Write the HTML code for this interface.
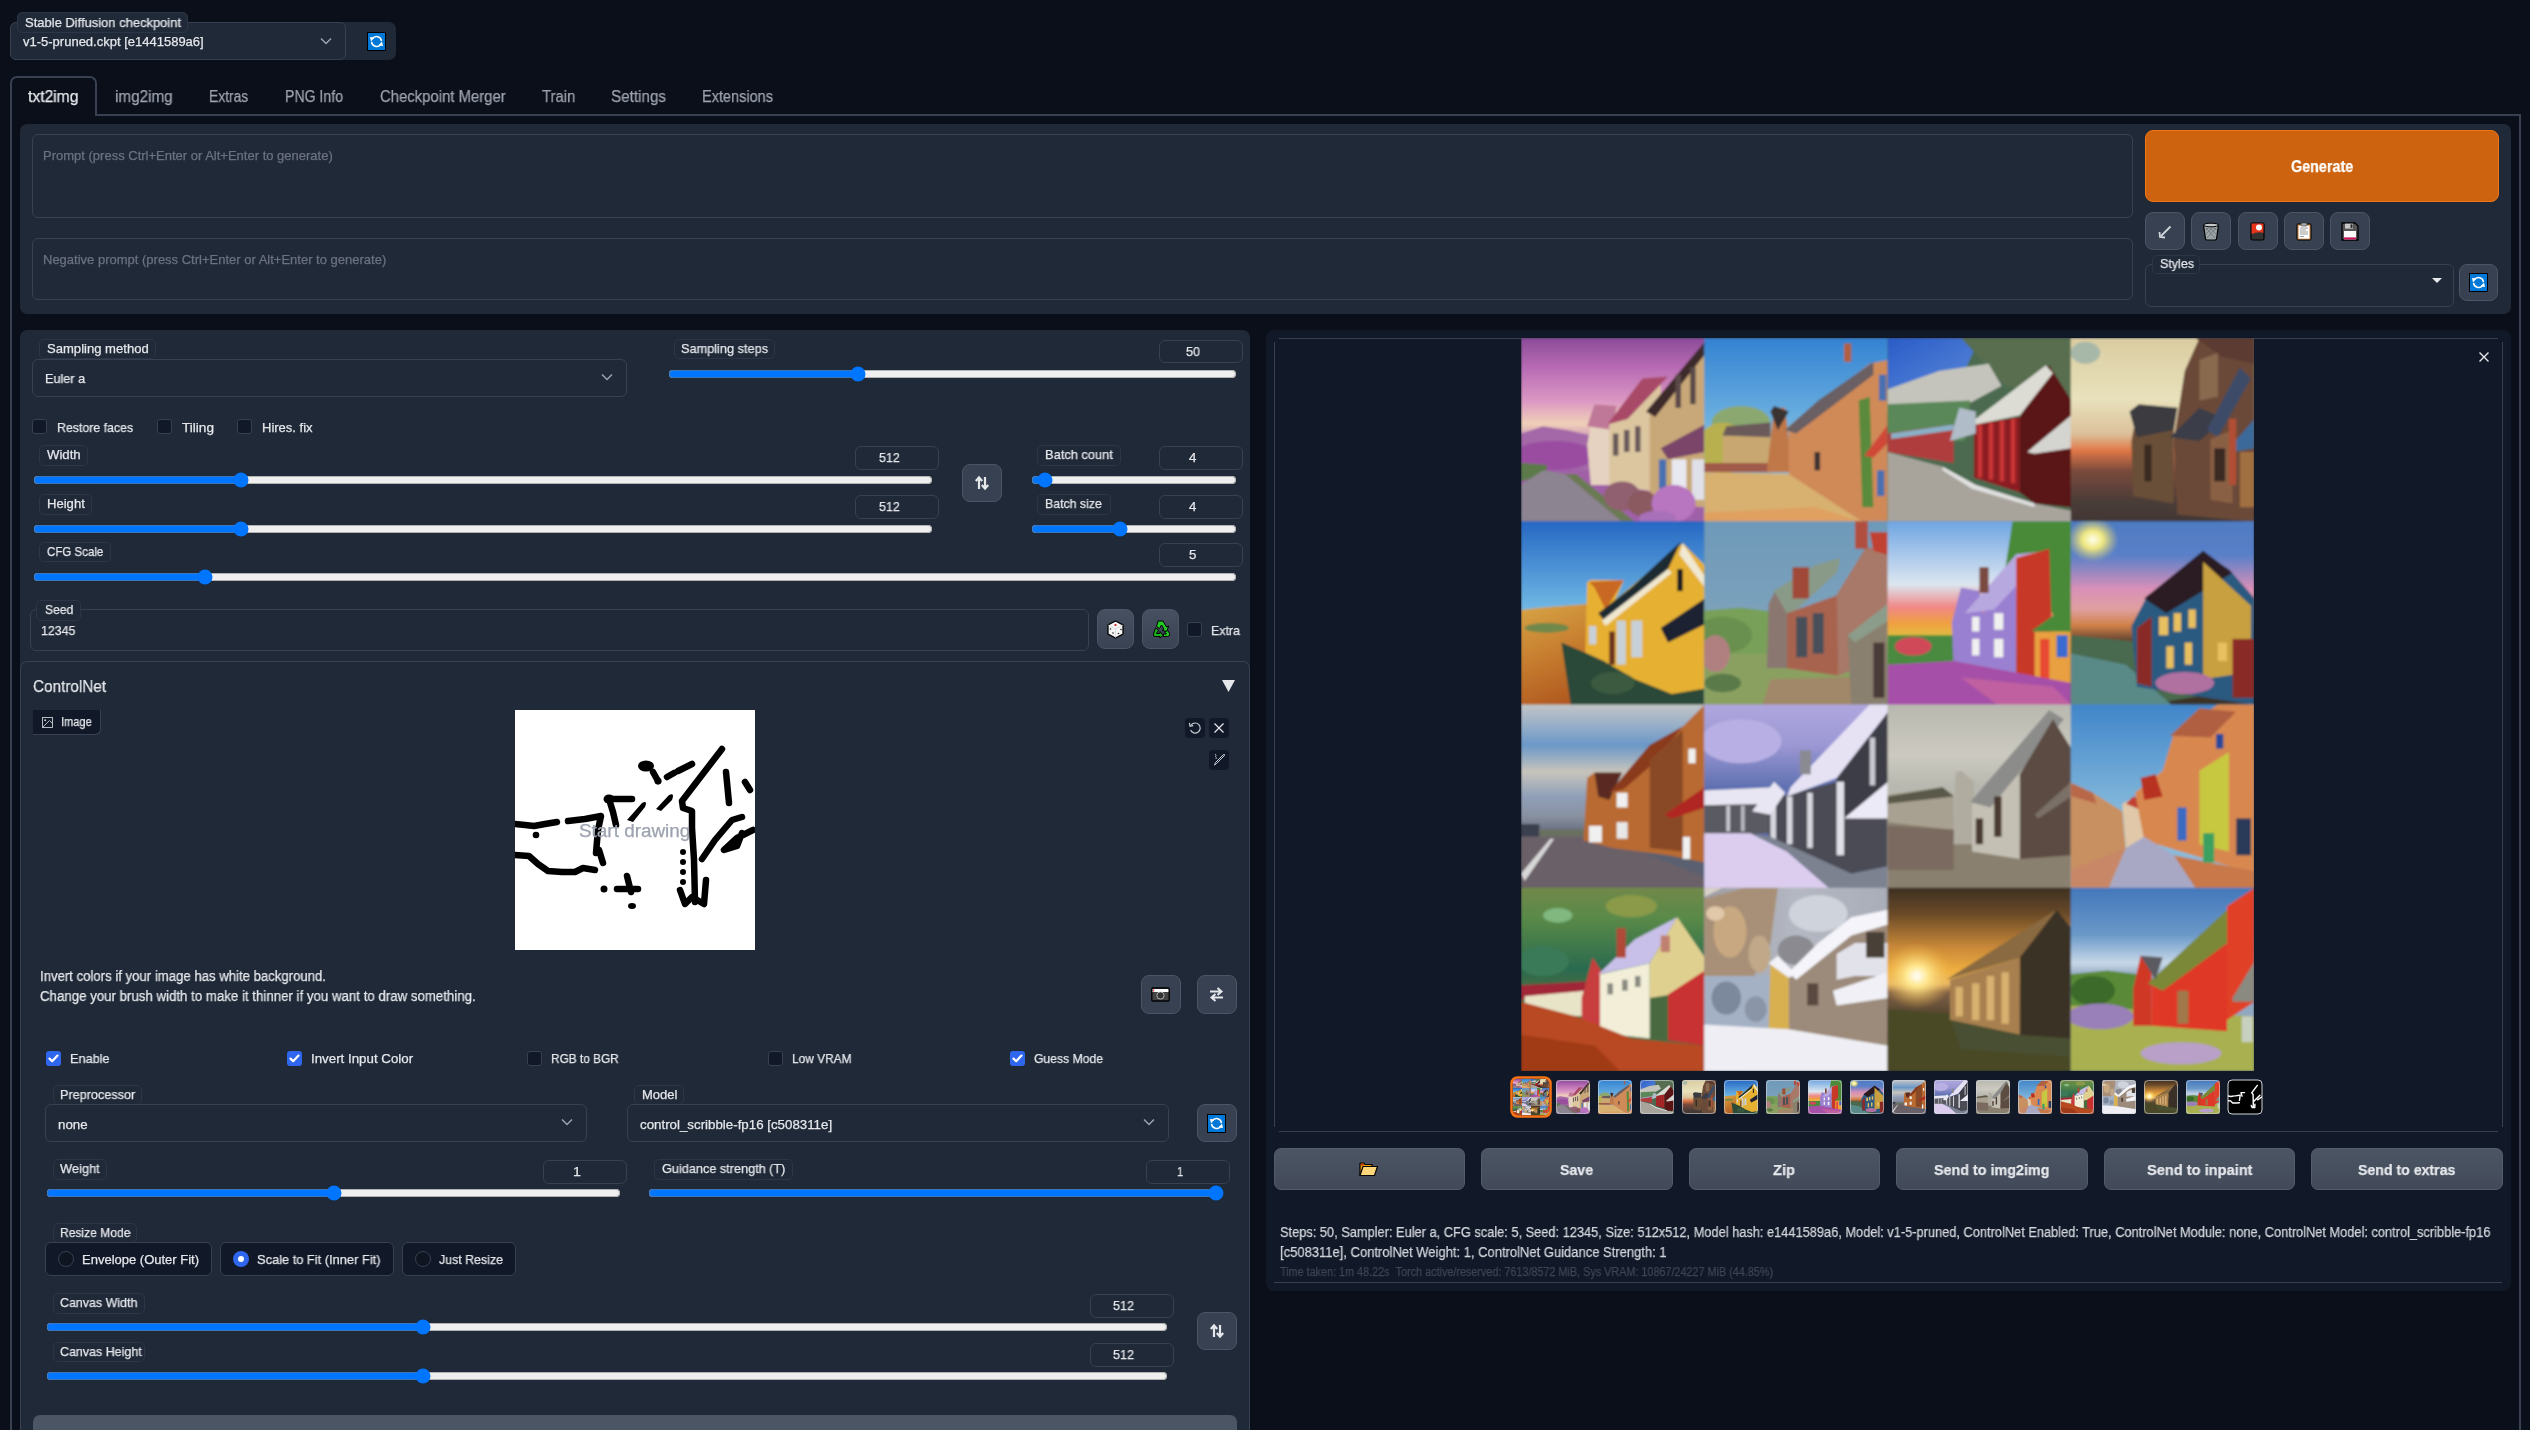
<!DOCTYPE html><html><head><meta charset="utf-8"><style>
*{box-sizing:border-box;margin:0;padding:0}
html,body{width:2530px;height:1430px;overflow:hidden;background:#0b0f19;font-family:"Liberation Sans", sans-serif;color:#e5e7eb}
.a{position:absolute}
.t{position:absolute;white-space:nowrap;line-height:1;transform-origin:0 0;-webkit-text-stroke:0.25px currentColor;will-change:transform}
.lbl{position:absolute;border:1px solid #2c3646;border-radius:5px;background:#1f2937}
.inp{position:absolute;border:1px solid #374151;border-radius:6px;background:#1f2937}
.btn{position:absolute;border:1px solid #4b5563;border-radius:7px;background:#374151}
.cb{position:absolute;width:15px;height:15px;border:1px solid #374151;border-radius:3px;background:#111827}
.cbc{position:absolute;width:15px;height:15px;border-radius:3px;background:#2f66ee}
.rng{position:absolute;margin:0;height:16px}
</style></head><body>
<div class="a" style="left:10px;top:22px;width:386px;height:38px;background:#1f2937;border-radius:7px"></div>
<div class="inp" style="left:10px;top:22px;width:336px;height:38px;"></div>
<div class="lbl" style="left:17px;top:12px;width:171px;height:21px"></div>
<div class="t" style="left:25px;top:16.3px;font-size:13px;color:#e5e7eb;font-weight:normal;transform:scaleX(0.9963);">Stable Diffusion checkpoint</div>
<div class="t" style="left:23px;top:34.5px;font-size:13px;color:#e5e7eb;font-weight:normal;">v1-5-pruned.ckpt [e1441589a6]</div>
<svg class="a" style="left:320px;top:37px" width="12" height="8" viewBox="0 0 12 8"><path d="M1 1.5 L6 6.5 L11 1.5" stroke="#9ca3af" stroke-width="1.5" fill="none"/></svg>
<svg class="a" style="left:367px;top:32px" width="19" height="19" viewBox="0 0 19 19"><rect x="0.5" y="0.5" width="18" height="18" fill="#0078d7" stroke="#000" stroke-width="1"/><path d="M5.4 6.63 A5 5 0 0 1 14.48 9.06" stroke="#fff" stroke-width="1.5" fill="none"/><path d="M13.6 12.37 A5 5 0 0 1 4.52 9.94" stroke="#fff" stroke-width="1.5" fill="none"/><path d="M3 5 L7.6 5.6 L4 9.6Z" fill="#fff"/><path d="M16 14 L11.4 13.4 L15 9.4Z" fill="#fff"/></svg>
<div class="a" style="left:10px;top:114px;width:2511px;height:1316px;border:2px solid #374151;border-bottom:none"></div>
<div class="a" style="left:10px;top:76px;width:87px;height:40px;border:2px solid #374151;border-bottom:none;border-radius:7px 7px 0 0;background:#0b0f19"></div>
<div class="t" style="left:28.2px;top:88.5px;font-size:16px;color:#e5e7eb;font-weight:normal;transform:scaleX(0.9772);">txt2img</div>
<div class="t" style="left:115px;top:88.5px;font-size:16px;color:#9ca3af;font-weight:normal;transform:scaleX(0.9542);">img2img</div>
<div class="t" style="left:209.3px;top:88.5px;font-size:16px;color:#9ca3af;font-weight:normal;transform:scaleX(0.8645);">Extras</div>
<div class="t" style="left:285px;top:88.5px;font-size:16px;color:#9ca3af;font-weight:normal;transform:scaleX(0.8813);">PNG Info</div>
<div class="t" style="left:380px;top:88.5px;font-size:16px;color:#9ca3af;font-weight:normal;transform:scaleX(0.9299);">Checkpoint Merger</div>
<div class="t" style="left:541.7px;top:88.5px;font-size:16px;color:#9ca3af;font-weight:normal;transform:scaleX(0.9286);">Train</div>
<div class="t" style="left:611px;top:88.5px;font-size:16px;color:#9ca3af;font-weight:normal;transform:scaleX(0.9514);">Settings</div>
<div class="t" style="left:702px;top:88.5px;font-size:16px;color:#9ca3af;font-weight:normal;transform:scaleX(0.9072);">Extensions</div>
<div class="a" style="left:20px;top:124px;width:2491px;height:190px;background:#1f2937;border-radius:7px"></div>
<div class="inp" style="left:32px;top:134px;width:2101px;height:84px;"></div>
<div class="t" style="left:43px;top:148.5px;font-size:13px;color:#6b7280;font-weight:normal;">Prompt (press Ctrl+Enter or Alt+Enter to generate)</div>
<div class="inp" style="left:32px;top:238px;width:2101px;height:62px;"></div>
<div class="t" style="left:43px;top:252.5px;font-size:13px;color:#6b7280;font-weight:normal;">Negative prompt (press Ctrl+Enter or Alt+Enter to generate)</div>
<div class="a" style="left:2145px;top:130px;width:354px;height:72px;background:#cd630e;border:1px solid #f07515;border-radius:8px"></div>
<div class="t" style="left:2290.7px;top:158.7px;font-size:16px;color:#ffffff;font-weight:bold;transform:scaleX(0.8966);">Generate</div>
<div class="btn" style="left:2145px;top:212px;width:40px;height:38px;border-radius:8px"></div>
<div class="btn" style="left:2191px;top:212px;width:40px;height:38px;border-radius:8px"></div>
<div class="btn" style="left:2238px;top:212px;width:40px;height:38px;border-radius:8px"></div>
<div class="btn" style="left:2284px;top:212px;width:40px;height:38px;border-radius:8px"></div>
<div class="btn" style="left:2330px;top:212px;width:40px;height:38px;border-radius:8px"></div>
<div class="inp" style="left:2145px;top:264px;width:309px;height:43px;"></div>
<div class="lbl" style="left:2152px;top:255px;width:48px;height:19px"></div>
<div class="t" style="left:2159.5px;top:257.3px;font-size:13px;color:#e5e7eb;font-weight:normal;transform:scaleX(0.9603);">Styles</div>
<svg class="a" style="left:2432px;top:278px" width="10" height="6"><path d="M0 0 L10 0 L5 5Z" fill="#e5e7eb"/></svg>
<div class="btn" style="left:2459px;top:264px;width:39px;height:37px;border-radius:8px"></div>
<svg class="a" style="left:2469px;top:273px" width="19" height="19" viewBox="0 0 19 19"><rect x="0.5" y="0.5" width="18" height="18" fill="#0078d7" stroke="#000" stroke-width="1"/><path d="M5.4 6.63 A5 5 0 0 1 14.48 9.06" stroke="#fff" stroke-width="1.5" fill="none"/><path d="M13.6 12.37 A5 5 0 0 1 4.52 9.94" stroke="#fff" stroke-width="1.5" fill="none"/><path d="M3 5 L7.6 5.6 L4 9.6Z" fill="#fff"/><path d="M16 14 L11.4 13.4 L15 9.4Z" fill="#fff"/></svg>
<div class="a" style="left:20px;top:330px;width:1230px;height:1100px;background:#1f2937;border-radius:7px 7px 0 0"></div>
<div class="lbl" style="left:39px;top:339px;width:117px;height:20px"></div>
<div class="t" style="left:46.8px;top:341.8px;font-size:13px;color:#e5e7eb;font-weight:normal;transform:scaleX(1.0052);">Sampling method</div>
<div class="inp" style="left:32px;top:359px;width:595px;height:38px;"></div>
<div class="t" style="left:45.2px;top:372.0px;font-size:13px;color:#e5e7eb;font-weight:normal;transform:scaleX(0.9732);">Euler a</div>
<svg class="a" style="left:601px;top:373px" width="12" height="8" viewBox="0 0 12 8"><path d="M1 1.5 L6 6.5 L11 1.5" stroke="#9ca3af" stroke-width="1.5" fill="none"/></svg>
<div class="lbl" style="left:674px;top:339px;width:101px;height:20px"></div>
<div class="t" style="left:681.2px;top:341.8px;font-size:13px;color:#e5e7eb;font-weight:normal;transform:scaleX(0.9787);">Sampling steps</div>
<div class="inp" style="left:1159px;top:340px;width:84px;height:23px;"></div>
<div class="t" style="left:1186px;top:344.9px;font-size:13px;color:#e5e7eb;font-weight:normal;transform:scaleX(0.9676);">50</div>
<input type="range" class="rng" min="1" max="150" value="50" step="any" style="left:668px;top:366px;width:569px">
<div class="cb" style="left:32px;top:419px"></div>
<div class="t" style="left:56.5px;top:421.0px;font-size:13px;color:#e5e7eb;font-weight:normal;transform:scaleX(0.9488);">Restore faces</div>
<div class="cb" style="left:157px;top:419px"></div>
<div class="t" style="left:181.5px;top:421.0px;font-size:13px;color:#e5e7eb;font-weight:normal;transform:scaleX(1.0460);">Tiling</div>
<div class="cb" style="left:237px;top:419px"></div>
<div class="t" style="left:261.5px;top:421.0px;font-size:13px;color:#e5e7eb;font-weight:normal;transform:scaleX(0.9928);">Hires. fix</div>
<div class="lbl" style="left:39px;top:445px;width:49px;height:21px"></div>
<div class="t" style="left:46.5px;top:448.3px;font-size:13px;color:#e5e7eb;font-weight:normal;transform:scaleX(1.0140);">Width</div>
<div class="inp" style="left:855px;top:446px;width:84px;height:24px;"></div>
<div class="t" style="left:879px;top:451.4px;font-size:13px;color:#e5e7eb;font-weight:normal;transform:scaleX(0.9584);">512</div>
<input type="range" class="rng" min="64" max="2048" value="512" step="any" style="left:33px;top:472px;width:900px">
<div class="lbl" style="left:39px;top:494px;width:53px;height:21px"></div>
<div class="t" style="left:46.5px;top:497.3px;font-size:13px;color:#e5e7eb;font-weight:normal;transform:scaleX(1.0059);">Height</div>
<div class="inp" style="left:855px;top:495px;width:84px;height:24px;"></div>
<div class="t" style="left:879px;top:500.4px;font-size:13px;color:#e5e7eb;font-weight:normal;transform:scaleX(0.9584);">512</div>
<input type="range" class="rng" min="64" max="2048" value="512" step="any" style="left:33px;top:521px;width:900px">
<div class="btn" style="left:962px;top:464px;width:40px;height:38px;border-radius:8px"></div>
<svg class="a" style="left:974px;top:475px" width="16" height="16" viewBox="0 0 16 16"><path d="M5 14 V3 M1.8 6 L5 2.5 L8.2 6" stroke="#e5e7eb" stroke-width="2.2" fill="none"/><path d="M11 2 V13 M7.8 10 L11 13.5 L14.2 10" stroke="#e5e7eb" stroke-width="2.2" fill="none"/></svg>
<div class="lbl" style="left:1037px;top:445px;width:84px;height:21px"></div>
<div class="t" style="left:1045px;top:448.3px;font-size:13px;color:#e5e7eb;font-weight:normal;transform:scaleX(0.9890);">Batch count</div>
<div class="inp" style="left:1159px;top:446px;width:84px;height:24px;"></div>
<div class="t" style="left:1189px;top:451.4px;font-size:13px;color:#e5e7eb;font-weight:normal;transform:scaleX(1.0229);">4</div>
<input type="range" class="rng" min="1" max="100" value="4" step="any" style="left:1031px;top:472px;width:206px">
<div class="lbl" style="left:1037px;top:494px;width:74px;height:21px"></div>
<div class="t" style="left:1045px;top:497.3px;font-size:13px;color:#e5e7eb;font-weight:normal;transform:scaleX(0.9469);">Batch size</div>
<div class="inp" style="left:1159px;top:495px;width:84px;height:24px;"></div>
<div class="t" style="left:1189px;top:500.4px;font-size:13px;color:#e5e7eb;font-weight:normal;transform:scaleX(1.0229);">4</div>
<input type="range" class="rng" min="1" max="8" value="4" step="any" style="left:1031px;top:521px;width:206px">
<div class="lbl" style="left:39px;top:542px;width:72px;height:20px"></div>
<div class="t" style="left:46.5px;top:544.8px;font-size:13px;color:#e5e7eb;font-weight:normal;transform:scaleX(0.8855);">CFG Scale</div>
<div class="inp" style="left:1159px;top:543px;width:84px;height:24px;"></div>
<div class="t" style="left:1189px;top:548.4px;font-size:13px;color:#e5e7eb;font-weight:normal;transform:scaleX(1.0229);">5</div>
<input type="range" class="rng" min="1" max="30" value="5" step="any" style="left:33px;top:569px;width:1204px">
<div class="inp" style="left:30px;top:609px;width:1059px;height:42px;"></div>
<div class="lbl" style="left:36px;top:600px;width:45px;height:21px"></div>
<div class="t" style="left:44.5px;top:603.3px;font-size:13px;color:#e5e7eb;font-weight:normal;transform:scaleX(0.9284);">Seed</div>
<div class="t" style="left:41px;top:624.0px;font-size:13px;color:#e5e7eb;font-weight:normal;transform:scaleX(0.9487);">12345</div>
<div class="cb" style="left:1187px;top:622px"></div>
<div class="t" style="left:1211px;top:624.0px;font-size:13px;color:#e5e7eb;font-weight:normal;transform:scaleX(0.9557);">Extra</div>
<div class="a" style="left:20px;top:661px;width:1230px;height:769px;border:1px solid #374151;border-bottom:none;border-radius:7px 7px 0 0"></div>
<div class="t" style="left:33.2px;top:677.6px;font-size:17px;color:#e5e7eb;font-weight:normal;transform:scaleX(0.8995);">ControlNet</div>
<svg class="a" style="left:1222px;top:680px" width="13" height="12"><path d="M0 0 L13 0 L6.5 12Z" fill="#e5e7eb"/></svg>
<div class="a" style="left:33px;top:710px;width:68px;height:25px;background:#111827;border-right:1px solid #374151;border-bottom:1px solid #374151;border-radius:0 0 6px 0"></div>
<div class="t" style="left:61px;top:715.8px;font-size:12px;color:#e5e7eb;font-weight:normal;transform:scaleX(0.9203);">Image</div>
<div class="a" style="left:515px;top:710px;width:240px;height:240px;background:#fff"></div>
<div class="a" style="left:1185px;top:718px;width:20px;height:20px;background:#111827;border-radius:4px"></div>
<div class="a" style="left:1209px;top:718px;width:20px;height:20px;background:#111827;border-radius:4px"></div>
<div class="a" style="left:1209px;top:750px;width:20px;height:20px;background:#111827;border-radius:4px"></div>
<div class="t" style="left:40px;top:969.1px;font-size:14px;color:#e5e7eb;font-weight:normal;transform:scaleX(0.9400);">Invert colors if your image has white background.</div>
<div class="t" style="left:40px;top:989.1px;font-size:14px;color:#e5e7eb;font-weight:normal;transform:scaleX(0.9473);">Change your brush width to make it thinner if you want to draw something.</div>
<div class="btn" style="left:1141px;top:975px;width:40px;height:39px;border-radius:8px"></div>
<div class="btn" style="left:1197px;top:975px;width:40px;height:39px;border-radius:8px"></div>
<div class="cbc" style="left:46px;top:1051px"></div>
<svg class="a" style="left:46px;top:1051px" width="15" height="15" viewBox="0 0 15 15"><path d="M3.5 7.6 L6.2 10.2 L11.5 4.6" stroke="#fff" stroke-width="2.2" fill="none" stroke-linecap="round" stroke-linejoin="round"/></svg>
<div class="t" style="left:69.5px;top:1052.0px;font-size:13px;color:#e5e7eb;font-weight:normal;transform:scaleX(0.9757);">Enable</div>
<div class="cbc" style="left:287px;top:1051px"></div>
<svg class="a" style="left:287px;top:1051px" width="15" height="15" viewBox="0 0 15 15"><path d="M3.5 7.6 L6.2 10.2 L11.5 4.6" stroke="#fff" stroke-width="2.2" fill="none" stroke-linecap="round" stroke-linejoin="round"/></svg>
<div class="t" style="left:310.5px;top:1052.0px;font-size:13px;color:#e5e7eb;font-weight:normal;transform:scaleX(1.0239);">Invert Input Color</div>
<div class="cb" style="left:527px;top:1051px"></div>
<div class="t" style="left:550.5px;top:1052.0px;font-size:13px;color:#e5e7eb;font-weight:normal;transform:scaleX(0.9097);">RGB to BGR</div>
<div class="cb" style="left:768px;top:1051px"></div>
<div class="t" style="left:791.5px;top:1052.0px;font-size:13px;color:#e5e7eb;font-weight:normal;transform:scaleX(0.9149);">Low VRAM</div>
<div class="cbc" style="left:1010px;top:1051px"></div>
<svg class="a" style="left:1010px;top:1051px" width="15" height="15" viewBox="0 0 15 15"><path d="M3.5 7.6 L6.2 10.2 L11.5 4.6" stroke="#fff" stroke-width="2.2" fill="none" stroke-linecap="round" stroke-linejoin="round"/></svg>
<div class="t" style="left:1033.5px;top:1052.0px;font-size:13px;color:#e5e7eb;font-weight:normal;transform:scaleX(0.9362);">Guess Mode</div>
<div class="lbl" style="left:53px;top:1085px;width:89px;height:20px"></div>
<div class="t" style="left:59.6px;top:1087.8px;font-size:13px;color:#e5e7eb;font-weight:normal;transform:scaleX(0.9727);">Preprocessor</div>
<div class="inp" style="left:45px;top:1104px;width:542px;height:38px;"></div>
<div class="t" style="left:58px;top:1117.5px;font-size:13px;color:#e5e7eb;font-weight:normal;transform:scaleX(1.0234);">none</div>
<svg class="a" style="left:561px;top:1118px" width="12" height="8" viewBox="0 0 12 8"><path d="M1 1.5 L6 6.5 L11 1.5" stroke="#9ca3af" stroke-width="1.5" fill="none"/></svg>
<div class="lbl" style="left:634px;top:1085px;width:50px;height:20px"></div>
<div class="t" style="left:641.8px;top:1087.8px;font-size:13px;color:#e5e7eb;font-weight:normal;transform:scaleX(0.9881);">Model</div>
<div class="inp" style="left:627px;top:1104px;width:542px;height:38px;"></div>
<div class="t" style="left:639.6px;top:1117.5px;font-size:13px;color:#e5e7eb;font-weight:normal;transform:scaleX(1.0237);">control_scribble-fp16 [c508311e]</div>
<svg class="a" style="left:1143px;top:1118px" width="12" height="8" viewBox="0 0 12 8"><path d="M1 1.5 L6 6.5 L11 1.5" stroke="#9ca3af" stroke-width="1.5" fill="none"/></svg>
<div class="btn" style="left:1197px;top:1104px;width:40px;height:38px;border-radius:8px"></div>
<svg class="a" style="left:1207px;top:1114px" width="19" height="19" viewBox="0 0 19 19"><rect x="0.5" y="0.5" width="18" height="18" fill="#0078d7" stroke="#000" stroke-width="1"/><path d="M5.4 6.63 A5 5 0 0 1 14.48 9.06" stroke="#fff" stroke-width="1.5" fill="none"/><path d="M13.6 12.37 A5 5 0 0 1 4.52 9.94" stroke="#fff" stroke-width="1.5" fill="none"/><path d="M3 5 L7.6 5.6 L4 9.6Z" fill="#fff"/><path d="M16 14 L11.4 13.4 L15 9.4Z" fill="#fff"/></svg>
<div class="lbl" style="left:53px;top:1159px;width:54px;height:21px"></div>
<div class="t" style="left:59.6px;top:1162.3px;font-size:13px;color:#e5e7eb;font-weight:normal;transform:scaleX(0.9867);">Weight</div>
<div class="inp" style="left:543px;top:1160px;width:84px;height:24px;"></div>
<div class="t" style="left:573.4px;top:1165.4px;font-size:13px;color:#e5e7eb;font-weight:normal;transform:scaleX(1.0920);">1</div>
<input type="range" class="rng" min="0" max="2" value="1" step="any" style="left:46px;top:1185px;width:575px">
<div class="lbl" style="left:654px;top:1159px;width:139px;height:21px"></div>
<div class="t" style="left:661.6px;top:1162.3px;font-size:13px;color:#e5e7eb;font-weight:normal;transform:scaleX(0.9759);">Guidance strength (T)</div>
<div class="inp" style="left:1146px;top:1160px;width:84px;height:24px;"></div>
<div class="t" style="left:1176.6px;top:1165.4px;font-size:13px;color:#e5e7eb;font-weight:normal;transform:scaleX(0.8570);">1</div>
<input type="range" class="rng" min="0" max="1" value="1" step="any" style="left:648px;top:1185px;width:576px">
<div class="lbl" style="left:53px;top:1223px;width:84px;height:20px"></div>
<div class="t" style="left:59.6px;top:1225.8px;font-size:13px;color:#e5e7eb;font-weight:normal;transform:scaleX(0.9278);">Resize Mode</div>
<div class="a" style="left:45px;top:1242px;width:167px;height:34px;background:#111827;border:1px solid #374151;border-radius:6px"></div>
<div class="a" style="left:58px;top:1251px;width:16px;height:16px;border-radius:50%;background:#0f1521;border:1px solid #374151"></div>
<div class="t" style="left:82px;top:1253.0px;font-size:13px;color:#e5e7eb;font-weight:normal;transform:scaleX(0.9962);">Envelope (Outer Fit)</div>
<div class="a" style="left:220px;top:1242px;width:174px;height:34px;background:#111827;border:1px solid #374151;border-radius:6px"></div>
<div class="a" style="left:233px;top:1251px;width:16px;height:16px;border-radius:50%;background:#2f66ee"></div><div class="a" style="left:238px;top:1256px;width:6px;height:6px;border-radius:50%;background:#fff"></div>
<div class="t" style="left:257px;top:1253.0px;font-size:13px;color:#e5e7eb;font-weight:normal;transform:scaleX(0.9873);">Scale to Fit (Inner Fit)</div>
<div class="a" style="left:402px;top:1242px;width:114px;height:34px;background:#111827;border:1px solid #374151;border-radius:6px"></div>
<div class="a" style="left:415px;top:1251px;width:16px;height:16px;border-radius:50%;background:#0f1521;border:1px solid #374151"></div>
<div class="t" style="left:439px;top:1253.0px;font-size:13px;color:#e5e7eb;font-weight:normal;transform:scaleX(0.9523);">Just Resize</div>
<div class="lbl" style="left:53px;top:1293px;width:92px;height:21px"></div>
<div class="t" style="left:59.6px;top:1296.3px;font-size:13px;color:#e5e7eb;font-weight:normal;transform:scaleX(0.9565);">Canvas Width</div>
<div class="inp" style="left:1090px;top:1294px;width:84px;height:24px;"></div>
<div class="t" style="left:1113px;top:1299.4px;font-size:13px;color:#e5e7eb;font-weight:normal;transform:scaleX(0.9676);">512</div>
<input type="range" class="rng" min="256" max="1024" value="512" step="any" style="left:46px;top:1319px;width:1122px">
<div class="lbl" style="left:53px;top:1342px;width:92px;height:20px"></div>
<div class="t" style="left:59.6px;top:1344.8px;font-size:13px;color:#e5e7eb;font-weight:normal;transform:scaleX(0.9580);">Canvas Height</div>
<div class="inp" style="left:1090px;top:1343px;width:84px;height:24px;"></div>
<div class="t" style="left:1113px;top:1348.4px;font-size:13px;color:#e5e7eb;font-weight:normal;transform:scaleX(0.9676);">512</div>
<input type="range" class="rng" min="256" max="1024" value="512" step="any" style="left:46px;top:1368px;width:1122px">
<div class="btn" style="left:1197px;top:1312px;width:40px;height:38px;border-radius:8px"></div>
<svg class="a" style="left:1209px;top:1323px" width="16" height="16" viewBox="0 0 16 16"><path d="M5 14 V3 M1.8 6 L5 2.5 L8.2 6" stroke="#e5e7eb" stroke-width="2.2" fill="none"/><path d="M11 2 V13 M7.8 10 L11 13.5 L14.2 10" stroke="#e5e7eb" stroke-width="2.2" fill="none"/></svg>
<div class="a" style="left:33px;top:1415px;width:1204px;height:15px;background:#4b5563;border-radius:7px 7px 0 0"></div>
<div class="a" style="left:1266px;top:330px;width:1245px;height:961px;background:#111827;border-radius:8px"></div>
<div class="a" style="left:1279px;top:338px;width:1219px;height:1px;background:#374151"></div>
<div class="a" style="left:1274px;top:342px;width:1px;height:785px;background:#374151"></div>
<div class="a" style="left:2502px;top:342px;width:1px;height:785px;background:#374151"></div>
<div class="a" style="left:1279px;top:1131px;width:1219px;height:1px;background:#374151"></div>
<svg class="a" style="left:1521px;top:338px" width="733" height="733" viewBox="0 0 733 733"><defs><linearGradient id="g00" x1="0" y1="0" x2="0" y2="1"><stop offset="0" stop-color="#7c3f8e"/><stop offset="0.2" stop-color="#b86cb4"/><stop offset="0.36" stop-color="#dc98c4"/><stop offset="0.47" stop-color="#f0d0b8"/><stop offset="0.55" stop-color="#c890b8"/><stop offset="0.7" stop-color="#a060a8"/></linearGradient><linearGradient id="g01" x1="0" y1="0" x2="0" y2="1"><stop offset="0" stop-color="#2c7cd0"/><stop offset="0.45" stop-color="#6cb0e0"/><stop offset="0.55" stop-color="#88bcd8"/></linearGradient><linearGradient id="g02" x1="0" y1="0" x2="1" y2="1"><stop offset="0" stop-color="#2a5cc8"/><stop offset="1" stop-color="#5a88d8"/></linearGradient><linearGradient id="g03" x1="0" y1="0" x2="0" y2="1"><stop offset="0" stop-color="#d8c89c"/><stop offset="0.35" stop-color="#e8e2bc"/><stop offset="0.52" stop-color="#dcc09a"/><stop offset="0.6" stop-color="#e07848"/><stop offset="0.7" stop-color="#7a4a3c"/><stop offset="0.85" stop-color="#4a3c38"/><stop offset="1" stop-color="#3c3430"/></linearGradient><linearGradient id="g10" x1="0" y1="0" x2="0" y2="1"><stop offset="0" stop-color="#1c5ec0"/><stop offset="0.48" stop-color="#70b8e4"/></linearGradient><linearGradient id="hill10" x1="0" y1="0" x2="0.3" y2="1"><stop offset="0" stop-color="#d8a848"/><stop offset="0.5" stop-color="#c88030"/><stop offset="1" stop-color="#b05820"/></linearGradient><linearGradient id="g11" x1="0" y1="0" x2="0" y2="1"><stop offset="0" stop-color="#6c98b8"/><stop offset="0.5" stop-color="#7ca2bc"/></linearGradient><linearGradient id="g12" x1="0" y1="0" x2="0" y2="1"><stop offset="0" stop-color="#5c9ae0"/><stop offset="0.36" stop-color="#dce6f0"/><stop offset="0.47" stop-color="#f08888"/><stop offset="0.55" stop-color="#f0a040"/><stop offset="0.62" stop-color="#e0c040"/><stop offset="0.7" stop-color="#5a9a40"/></linearGradient><linearGradient id="g13" x1="0" y1="0" x2="0" y2="1"><stop offset="0" stop-color="#4a7ac0"/><stop offset="0.22" stop-color="#5a80c8"/><stop offset="0.38" stop-color="#d890b8"/><stop offset="0.48" stop-color="#e0a0a0"/><stop offset="0.56" stop-color="#d08048"/><stop offset="0.66" stop-color="#3a3028"/></linearGradient><radialGradient id="sun13"><stop offset="0" stop-color="#fffff0"/><stop offset="0.4" stop-color="#f0e880"/><stop offset="1" stop-color="#e0d070" stop-opacity="0"/></radialGradient><linearGradient id="g20" x1="0" y1="0" x2="0" y2="1"><stop offset="0" stop-color="#d8d0c4"/><stop offset="0.15" stop-color="#9ab0c8"/><stop offset="0.25" stop-color="#6a98c8"/><stop offset="0.38" stop-color="#c8c4bc"/><stop offset="0.5" stop-color="#90a0b8"/><stop offset="0.6" stop-color="#8890a0"/><stop offset="0.7" stop-color="#5a6070"/></linearGradient><linearGradient id="g21" x1="0" y1="0" x2="0" y2="1"><stop offset="0" stop-color="#b4aae0"/><stop offset="0.25" stop-color="#9c98d4"/><stop offset="0.46" stop-color="#5e70b0"/></linearGradient><linearGradient id="g22" x1="0" y1="0" x2="0" y2="1"><stop offset="0" stop-color="#b4b4ac"/><stop offset="0.3" stop-color="#cccac0"/><stop offset="0.45" stop-color="#b8b8b0"/></linearGradient><linearGradient id="g23" x1="0" y1="0" x2="0" y2="1"><stop offset="0" stop-color="#3a80c8"/><stop offset="0.6" stop-color="#88bcdc"/></linearGradient><linearGradient id="g30" x1="0" y1="0" x2="0" y2="1"><stop offset="0" stop-color="#7a8848"/><stop offset="0.2" stop-color="#5a8a48"/><stop offset="0.45" stop-color="#2a6a50"/><stop offset="0.55" stop-color="#4a6a40"/></linearGradient><linearGradient id="g31" x1="0" y1="0" x2="1" y2="0"><stop offset="0" stop-color="#9a9aa2"/><stop offset="0.5" stop-color="#b4b8c2"/><stop offset="1" stop-color="#a8acb6"/></linearGradient><linearGradient id="g32" x1="0" y1="0" x2="0" y2="1"><stop offset="0" stop-color="#2a2520"/><stop offset="0.18" stop-color="#6a4a28"/><stop offset="0.34" stop-color="#c88838"/><stop offset="0.46" stop-color="#f0b040"/><stop offset="0.52" stop-color="#e8b868"/><stop offset="0.56" stop-color="#806048"/><stop offset="0.7" stop-color="#4a4028"/><stop offset="1" stop-color="#3a3420"/></linearGradient><radialGradient id="sun32"><stop offset="0" stop-color="#ffffff"/><stop offset="0.3" stop-color="#ffe890"/><stop offset="1" stop-color="#f0b040" stop-opacity="0"/></radialGradient><linearGradient id="g33" x1="0" y1="0" x2="0" y2="1"><stop offset="0" stop-color="#3a70b8"/><stop offset="0.28" stop-color="#6a98c8"/><stop offset="0.42" stop-color="#c8d8e8"/><stop offset="0.48" stop-color="#90a8c0"/></linearGradient><filter id="soft" x="0" y="0" width="733" height="733" filterUnits="userSpaceOnUse"><feGaussianBlur stdDeviation="0.9" edgeMode="duplicate"/></filter></defs><g filter="url(#soft)"><svg x="0.00" y="0.00" width="183.85" height="183.85" viewBox="0 0 100 100" preserveAspectRatio="none"><rect x="-6" y="-6" width="112" height="112" fill="url(#g00)" /><polygon points="0,52 12,48 25,50 38,53 38,72 0,72" fill="#a468a8" /><ellipse cx="18" cy="64" rx="22" ry="8" fill="#9a4ea0" /><polygon points="0,68 14,69 14,74 0,78" fill="#5c7a4a" /><polygon points="0,100 0,80 12,72 24,74 55,100" fill="#8c8490" /><polygon points="24,74 30,74 62,100 55,100" fill="#6a7a52" /><polygon points="36,58 40,36 52,38 52,80 38,80" fill="#e6d2c0" /><polygon points="36,48 40,36 52,37 50,50" fill="#c07898" /><polygon points="48,46 76,22 76,84 48,80" fill="#dcc6a0" /><polygon points="47,47 66,22 80,21 58,44" fill="#a84868" /><polygon points="70,40 100,4 100,92 70,90" fill="#c8a878" /><polygon points="68,40 100,2 100,9 73,43" fill="#3c2c2a" /><polygon points="76,60 100,47 100,62 80,66" fill="#7a4468" /><rect x="50" y="52" width="3" height="12" fill="#6a5a5a" /><rect x="56" y="50" width="3" height="12" fill="#6a5a5a" /><rect x="62" y="48" width="3" height="14" fill="#6a5a5a" /><rect x="84" y="20" width="3" height="18" fill="#5a4a48" /><rect x="92" y="16" width="3" height="20" fill="#5a4a48" /><rect x="82" y="66" width="8" height="20" fill="#e8e8f0" /><rect x="93" y="66" width="7" height="22" fill="#e0e0e8" /><rect x="75" y="66" width="4" height="16" fill="#4a70b0" /><ellipse cx="55" cy="86" rx="10" ry="8" fill="#906070" /><ellipse cx="66" cy="90" rx="8" ry="7" fill="#8a5a60" /><ellipse cx="83" cy="90" rx="12" ry="10" fill="#b874c0" /><ellipse cx="74" cy="98" rx="10" ry="4" fill="#a870b8" /></svg><svg x="183.25" y="0.00" width="183.85" height="183.85" viewBox="0 0 100 100" preserveAspectRatio="none"><rect x="-6" y="-6" width="112" height="112" fill="url(#g01)" /><ellipse cx="20" cy="46" rx="16" ry="9" fill="#8aa870" /><ellipse cx="10" cy="60" rx="14" ry="14" fill="#b8b050" /><polygon points="10,52 36,47 36,72 10,72" fill="#c8a870" /><polygon points="10,53 12,48 36,46 36,54" fill="#6a5a5a" /><polygon points="0,68 36,68 36,73 0,73" fill="#a05a48" /><polygon points="34,73 38,38 44,38 48,73" fill="#c07848" /><polygon points="36,40 38,37 46,40 40,50" fill="#3a3030" /><polygon points="46,48 90,14 100,12 100,100 82,100 46,76" fill="#d08a58" /><polygon points="44,50 62,34 92,13 92,20 50,52" fill="#6a5e62" /><rect x="76" y="3" width="4" height="10" fill="#b06040" /><polygon points="84,34 90,32 92,92 86,92" fill="#5a8a3a" /><polygon points="87,64 100,47 100,57 92,65" fill="#d04838" /><polygon points="0,73 46,74 86,100 0,100" fill="#d8b070" /><polygon points="0,95 60,92 86,100 0,100" fill="#e0a060" /><rect x="95" y="20" width="4" height="14" fill="#4a70b0" /><rect x="94" y="72" width="4" height="14" fill="#4a70b0" /><rect x="60" y="62" width="3" height="10" fill="#3a3030" /></svg><svg x="366.50" y="0.00" width="183.85" height="183.85" viewBox="0 0 100 100" preserveAspectRatio="none"><rect x="-6" y="-6" width="112" height="112" fill="#4c6a50" /><polygon points="0,0 50,0 42,18 0,28" fill="url(#g02)" /><polygon points="40,0 100,0 100,34 64,26" fill="#586e50" /><polygon points="0,28 28,18 55,14 62,26 40,38 0,40" fill="#c4c4bc" /><polygon points="0,36 45,34 42,56 0,56" fill="#5a8858" /><polygon points="0,52 36,47 36,68 0,62" fill="#b03c3c" /><polygon points="2,52 36,47 36,50 2,55" fill="#8ab0c8" /><polygon points="0,62 30,70 48,80 80,90 100,94 100,100 0,100" fill="#a8a49c" /><polygon points="30,70 48,80 80,90 80,92 46,82 30,72" fill="#e0e0e0" /><polygon points="47,47 72,43 72,84 47,76" fill="#8a1e22" /><polygon points="72,43 88,15 100,34 100,92 80,90 72,84" fill="#5a1416" /><rect x="49" y="47" width="2.5" height="29" fill="#c83434" /><rect x="55" y="46" width="2.5" height="31" fill="#c83434" /><rect x="61" y="45" width="2.5" height="33" fill="#c83434" /><rect x="67" y="44" width="2.5" height="35" fill="#c83434" /><polygon points="44,47 86,15 90,19 72,42 48,47" fill="#dcdcd4" /><polygon points="34,56 39,38 48,40 48,52" fill="#b0bcc8" /><polygon points="76,62 100,42 100,60 80,63" fill="#d4d4d0" /></svg><svg x="549.75" y="0.00" width="183.85" height="183.85" viewBox="0 0 100 100" preserveAspectRatio="none"><rect x="-6" y="-6" width="112" height="112" fill="url(#g03)" /><ellipse cx="8" cy="8" rx="8" ry="6" fill="#a8b8a8" /><polygon points="33,56 36,40 46,38 56,44 56,90 34,86" fill="#6a5038" /><polygon points="32,40 37,36 58,38 56,50 36,54" fill="#3a3a40" /><rect x="40" y="58" width="4" height="20" fill="#3a2a24" /><polygon points="56,56 62,18 70,0 100,0 100,100 58,96" fill="#6a4a38" /><polygon points="68,0 100,0 100,14 82,10" fill="#5c3a30" /><polygon points="70,12 80,8 80,32 70,34" fill="#8a6a50" /><polygon points="54,54 70,38 84,44 70,56" fill="#3a3c48" /><polygon points="74,50 92,16 98,22 80,54" fill="#3c4c68" /><polygon points="86,60 100,44 100,60 88,62" fill="#3a6a9a" /><polygon points="76,55 88,50 88,90 76,88" fill="#8a6044" /><rect x="86" y="44" width="4" height="36" fill="#b05034" /><rect x="92" y="62" width="8" height="30" fill="#a07040" /><rect x="78" y="60" width="6" height="18" fill="#3a2a24" /></svg><svg x="0.00" y="183.25" width="183.85" height="183.85" viewBox="0 0 100 100" preserveAspectRatio="none"><rect x="-6" y="-6" width="112" height="112" fill="url(#g10)" /><polygon points="-6,49 10,47 36,45 40,106 -6,106" fill="url(#hill10)" /><ellipse cx="14" cy="58" rx="12" ry="2.6" fill="#70884a" /><polygon points="34,106 36,33 38,32 56,32 48,50 48,106" fill="#e8b030" /><polygon points="37,33 56,32 46,48 40,36" fill="#c86820" /><polygon points="45,48 88,12 106,30 106,106 45,106" fill="#e6b030" /><polygon points="42,50 60,36 87,11 80,26 46,55" fill="#1c2a30" /><polygon points="44,54 80,26 82,28 46,57" fill="#f0e8d0" /><polygon points="88,12 100,30 100,36 86,18" fill="#f0e8d0" /><polygon points="76,58 100,42 100,56 80,66" fill="#1a2030" /><rect x="52" y="54" width="5" height="24" fill="#c8d0d8" /><rect x="60" y="54" width="6" height="20" fill="#c8d0d8" /><rect x="37" y="57" width="4" height="10" fill="#c8d0d8" /><rect x="85" y="26" width="3" height="12" fill="#1a1a20" /><rect x="48" y="60" width="3" height="18" fill="#6a3020" /><polygon points="22,66 36,72 45,76 62,86 82,94 106,90 106,106 28,106" fill="#2c4a38" /><ellipse cx="50" cy="88" rx="12" ry="6" fill="#3a5a40" /></svg><svg x="183.25" y="183.25" width="183.85" height="183.85" viewBox="0 0 100 100" preserveAspectRatio="none"><rect x="-6" y="-6" width="112" height="112" fill="url(#g11)" /><polygon points="-6,49 20,47 36,49 36,74 -6,74" fill="#78a058" /><ellipse cx="10" cy="62" rx="16" ry="10" fill="#6a9050" /><polygon points="-6,72 106,72 106,106 -6,106" fill="#8aa060" /><polygon points="36,86 106,84 106,106 30,106" fill="#a08868" /><ellipse cx="6" cy="72" rx="8" ry="10" fill="#b08080" /><ellipse cx="10" cy="88" rx="10" ry="5" fill="#5a7a48" /><polygon points="34,80 35,45 39,37 45,44 45,80" fill="#8a7870" /><polygon points="38,38 60,24 74,20 72,28 46,52" fill="#8a9a88" /><rect x="48" y="25" width="9" height="17" fill="#a04a38" /><polygon points="45,50 73,40 73,84 45,80" fill="#a86450" /><rect x="50" y="52" width="6" height="22" fill="#4a5058" /><rect x="59" y="50" width="6" height="22" fill="#4a5058" /><polygon points="72,40 88,14 100,16 106,18 106,70 73,84" fill="#a87868" /><rect x="82" y="-6" width="7" height="21" fill="#b05040" /><polygon points="90,6 106,6 106,20 92,16" fill="#c04030" /><polygon points="78,62 106,42 106,106 80,100" fill="#8a8070" /><polygon points="78,62 106,40 106,50 82,66" fill="#8c9c8a" /><rect x="92" y="66" width="6" height="30" fill="#4a3a38" /></svg><svg x="366.50" y="183.25" width="183.85" height="183.85" viewBox="0 0 100 100" preserveAspectRatio="none"><rect x="-6" y="-6" width="112" height="112" fill="url(#g12)" /><polygon points="68,0 100,0 100,62 86,46 64,26" fill="#4a8a38" /><polygon points="0,62 36,62 36,82 0,82" fill="#4a8a40" /><ellipse cx="14" cy="68" rx="10" ry="5" fill="#d04858" /><polygon points="35,55 40,36 50,38 52,50 70,22 70,84 36,80" fill="#9a80d0" /><polygon points="42,50 70,18 88,16 58,48" fill="#b8a8e0" /><rect x="50" y="25" width="5" height="14" fill="#7a4a40" /><polygon points="70,20 88,15 90,86 70,86" fill="#c83828" /><polygon points="80,60 100,60 100,90 80,88" fill="#e8a040" /><polygon points="78,60 100,44 100,60" fill="#4a8a38" /><rect x="83" y="64" width="5" height="22" fill="#e84830" /><rect x="92" y="62" width="6" height="12" fill="#3a6ad0" /><rect x="46" y="52" width="4" height="8" fill="#f0f0f0" /><rect x="58" y="50" width="5" height="9" fill="#f0f0f0" /><rect x="46" y="64" width="4" height="9" fill="#f0f0f0" /><rect x="58" y="64" width="5" height="10" fill="#f0f0f0" /><polygon points="0,78 36,76 100,88 100,100 0,100" fill="#a650a8" /><polygon points="40,85 90,90 100,100 60,100" fill="#c060a0" /></svg><svg x="549.75" y="183.25" width="183.85" height="183.85" viewBox="0 0 100 100" preserveAspectRatio="none"><rect x="-6" y="-6" width="112" height="112" fill="url(#g13)" /><ellipse cx="12" cy="10" rx="14" ry="12" fill="url(#sun13)" /><polygon points="0,62 40,66 70,95 40,100 0,100" fill="#4a6a50" /><polygon points="0,72 30,78 55,100 0,100" fill="#5a8a88" /><polygon points="33,57 42,40 60,35 72,18 86,26 100,42 100,100 36,90" fill="#2c5a80" /><polygon points="40,42 72,16 88,28 52,50" fill="#2a1a20" /><polygon points="72,22 98,46 98,82 72,86" fill="#c8a040" /><polygon points="36,58 44,52 44,90 36,88" fill="#8a2a28" /><rect x="88" y="64" width="12" height="32" fill="#8a2a28" /><rect x="48" y="52" width="5" height="10" fill="#e8c060" /><rect x="56" y="50" width="4" height="10" fill="#e8c060" /><rect x="64" y="48" width="4" height="10" fill="#e8c060" /><rect x="52" y="68" width="4" height="12" fill="#e8c060" /><rect x="62" y="66" width="4" height="12" fill="#e8c060" /><rect x="80" y="66" width="5" height="10" fill="#e8c060" /><ellipse cx="62" cy="88" rx="16" ry="6" fill="#b070a0" /></svg><svg x="0.00" y="366.50" width="183.85" height="183.85" viewBox="0 0 100 100" preserveAspectRatio="none"><rect x="-6" y="-6" width="112" height="112" fill="url(#g20)" /><polygon points="0,65 10,65 10,72 0,72" fill="#3a4050" /><polygon points="10,68 34,68 34,73 10,73" fill="#6a7060" /><polygon points="0,72 35,72 65,80 100,94 100,100 0,100" fill="#6a6068" /><polygon points="0,92 16,73 18,73 2,96" fill="#d8d8d8" /><polygon points="34,74 36,40 40,37 50,40 50,48 72,22 88,12 100,0 100,86 80,82 50,78" fill="#b86a30" /><polygon points="40,37 55,37 48,52 42,50" fill="#5a2a20" /><polygon points="48,48 70,22 88,12 72,32 56,46" fill="#8a3a1c" /><polygon points="70,30 88,14 88,80 70,78" fill="#8a4a28" /><polygon points="78,60 100,45 100,56 82,62" fill="#b02820" /><rect x="52" y="48" width="6" height="8" fill="#f0f0f0" /><rect x="52" y="64" width="6" height="9" fill="#e8e8e8" /><rect x="91" y="24" width="4" height="8" fill="#f0f0f0" /><rect x="88" y="72" width="4" height="12" fill="#f0f0f0" /><rect x="37" y="66" width="7" height="9" fill="#f0f0f0" /></svg><svg x="183.25" y="366.50" width="183.85" height="183.85" viewBox="0 0 100 100" preserveAspectRatio="none"><rect x="-6" y="-6" width="112" height="112" fill="url(#g21)" /><ellipse cx="20" cy="20" rx="22" ry="12" fill="#b8b0e4" /><polygon points="-6,47 38,45 40,54 -6,56" fill="#e8e6f2" /><polygon points="-6,55 36,54 36,70 -6,72" fill="#5a5a62" /><rect x="12" y="55" width="2" height="14" fill="#c8c8d0" /><rect x="20" y="55" width="2" height="14" fill="#b8b8c0" /><polygon points="35,52 72,42 100,30 100,88 80,92 35,72" fill="#4c4c54" /><polygon points="72,40 100,4 100,62 72,60" fill="#3e3e46" /><rect x="36" y="52" width="3" height="22" fill="#d8d8e0" /><rect x="45" y="50" width="3" height="26" fill="#d8d8e0" /><rect x="56" y="48" width="3" height="30" fill="#d8d8e0" /><rect x="72" y="42" width="4" height="40" fill="#e0e0e8" /><rect x="90" y="18" width="3" height="26" fill="#c8c8d0" /><polygon points="26,58 38,42 44,48 36,60" fill="#e8e6f2" /><polygon points="45,50 47,45 90,0 100,0 100,4 72,40" fill="#e6e2f4" /><rect x="52" y="25" width="6" height="13" fill="#8a8a92" /><polygon points="76,62 100,42 100,62" fill="#eceaf6" /><polygon points="-6,70 25,70 45,80 75,106 -6,106" fill="#dccdee" /><polygon points="25,70 45,80 75,106 100,106 100,88 80,92 36,72" fill="#7c8290" /></svg><svg x="366.50" y="366.50" width="183.85" height="183.85" viewBox="0 0 100 100" preserveAspectRatio="none"><rect x="-6" y="-6" width="112" height="112" fill="url(#g22)" /><polygon points="0,49 30,45 36,49 36,68 0,68" fill="#a8a090" /><polygon points="0,50 30,45 36,50 0,54" fill="#5a5848" /><polygon points="0,64 100,76 100,100 0,100" fill="#8a8070" /><polygon points="0,66 36,68 36,90 0,90" fill="#7a6a60" /><polygon points="36,76 37,37 40,36 47,42 47,76" fill="#b0aca0" /><polygon points="46,54 72,38 72,84 46,80" fill="#c4c0b4" /><polygon points="45,53 88,3 96,8 56,56" fill="#8c8c8a" /><polygon points="72,38 90,8 100,24 100,82 72,84" fill="#5c4c42" /><polygon points="80,60 100,42 100,50 82,62" fill="#7a7068" /><rect x="58" y="50" width="4" height="22" fill="#4a3a30" /><rect x="48" y="62" width="4" height="14" fill="#4a3a30" /></svg><svg x="549.75" y="366.50" width="183.85" height="183.85" viewBox="0 0 100 100" preserveAspectRatio="none"><rect x="-6" y="-6" width="112" height="112" fill="url(#g23)" /><polygon points="-6,40 12,48 28,58 30,80 -6,92" fill="#c89060" /><polygon points="-6,40 12,48 14,54 -6,48" fill="#b86848" /><polygon points="28,54 36,50 42,76 30,78" fill="#e0c8a8" /><polygon points="30,54 34,50 42,52 40,58" fill="#c04030" /><polygon points="35,48 50,36 56,16 80,0 106,-6 106,94 40,74" fill="#d88850" /><polygon points="70,36 86,26 86,80 70,76" fill="#c8c840" /><polygon points="38,40 46,38 50,50 40,52" fill="#b83020" /><polygon points="54,17 70,2 90,4 76,18" fill="#b06040" /><rect x="79" y="16" width="4" height="8" fill="#2a4a9a" /><polygon points="30,78 40,72 56,82 72,106 18,106" fill="#a8a8c4" /><polygon points="-6,92 30,78 18,106 -6,106" fill="#c88868" /><polygon points="56,82 106,92 106,106 72,106" fill="#c87848" /><rect x="90" y="62" width="8" height="20" fill="#2a3a5a" /><rect x="72" y="70" width="6" height="16" fill="#3aa060" /><rect x="58" y="56" width="5" height="18" fill="#3a6ac0" /></svg><svg x="0.00" y="549.75" width="183.85" height="183.85" viewBox="0 0 100 100" preserveAspectRatio="none"><rect x="-6" y="-6" width="112" height="112" fill="url(#g30)" /><ellipse cx="20" cy="15" rx="8" ry="4" fill="#80b880" /><ellipse cx="60" cy="10" rx="14" ry="6" fill="#8a9a48" /><ellipse cx="12" cy="40" rx="14" ry="8" fill="#3a7a58" /><polygon points="0,53 35,51 35,58 0,61" fill="#a02838" /><polygon points="2,59 35,56 35,70 2,68" fill="#e8e4c8" /><polygon points="33,60 39,38 44,46 44,80 33,76" fill="#c83c3c" /><polygon points="43,47 70,41 70,82 43,79" fill="#f2eed8" /><polygon points="42,47 62,28 85,16 70,41" fill="#c8c0e8" /><polygon points="70,41 85,16 100,38 100,60 82,58 70,60" fill="#e0d090" /><rect x="52" y="22" width="5" height="16" fill="#b04838" /><polygon points="80,58 100,45 100,86 80,83" fill="#c83030" /><rect x="47" y="52" width="3" height="6" fill="#8a8a80" /><rect x="55" y="50" width="3" height="6" fill="#8a8a80" /><rect x="62" y="48" width="3" height="6" fill="#8a8a80" /><rect x="76" y="26" width="5" height="9" fill="#c08070" /><polygon points="0,62 30,70 60,82 100,86 100,106 -6,106" fill="#b84a20" /><polygon points="0,80 40,86 60,106 -6,106" fill="#a03a18" /></svg><svg x="183.25" y="549.75" width="183.85" height="183.85" viewBox="0 0 100 100" preserveAspectRatio="none"><rect x="-6" y="-6" width="112" height="112" fill="url(#g31)" /><polygon points="0,0 10,0 0,5" fill="#d8d0c8" /><polygon points="0,6 22,0 40,0 36,30 26,50 0,50" fill="#a89078" /><ellipse cx="14" cy="24" rx="9" ry="14" fill="#c8a880" /><ellipse cx="30" cy="36" rx="6" ry="10" fill="#c0a888" /><ellipse cx="6" cy="14" rx="5" ry="4" fill="#e0c8a8" /><ellipse cx="62" cy="14" rx="16" ry="10" fill="#cfd3dc" /><ellipse cx="82" cy="30" rx="12" ry="8" fill="#c4c8d2" /><ellipse cx="50" cy="34" rx="10" ry="8" fill="#8a8a90" /><polygon points="0,48 30,48 40,46 40,76 0,76" fill="#a4b0c4" /><ellipse cx="12" cy="60" rx="8" ry="9" fill="#7c889c" /><ellipse cx="28" cy="66" rx="6" ry="7" fill="#8a96a8" /><polygon points="46,46 78,20 100,14 100,86 46,80" fill="#9c8a7a" /><polygon points="35,78 36,40 46,45 46,80" fill="#d8b050" /><polygon points="35,41 40,37 50,47 46,49" fill="#f2f2f8" /><polygon points="46,46 62,30 80,16 100,12 100,20 80,26 50,50" fill="#f4f4fa" /><polygon points="72,36 82,30 100,30 100,48 82,48 72,50" fill="#e2e2ea" /><polygon points="70,56 100,46 100,60 72,64" fill="#f0f0f6" /><rect x="88" y="24" width="10" height="14" fill="#4a4038" /><rect x="56" y="52" width="6" height="12" fill="#5a4a40" /><polygon points="-6,74 46,77 100,86 100,106 -6,106" fill="#eeeef4" /></svg><svg x="366.50" y="549.75" width="183.85" height="183.85" viewBox="0 0 100 100" preserveAspectRatio="none"><rect x="-6" y="-6" width="112" height="112" fill="url(#g32)" /><ellipse cx="16" cy="48" rx="20" ry="18" fill="url(#sun32)" /><polygon points="0,66 100,74 100,100 0,100" fill="#4a4828" /><polygon points="34,50 72,38 72,80 34,72" fill="#a88050" /><rect x="37" y="54" width="4" height="16" fill="#d8b070" /><rect x="46" y="52" width="4" height="20" fill="#d8b070" /><rect x="54" y="48" width="4" height="24" fill="#d8b070" /><rect x="62" y="46" width="4" height="28" fill="#d8b070" /><polygon points="32,50 92,12 100,22 72,38" fill="#8a6a40" /><polygon points="72,38 92,12 100,22 100,84 72,80" fill="#3a3028" /><polygon points="34,72 72,80 100,82 100,92 40,88" fill="#4a5030" /></svg><svg x="549.75" y="549.75" width="183.85" height="183.85" viewBox="0 0 100 100" preserveAspectRatio="none"><rect x="-6" y="-6" width="112" height="112" fill="url(#g33)" /><polygon points="0,47 20,45 36,47 36,68 0,68" fill="#5a8a38" /><ellipse cx="12" cy="56" rx="12" ry="8" fill="#3a6a2a" /><polygon points="0,64 100,70 100,100 0,100" fill="#a8b050" /><ellipse cx="16" cy="70" rx="18" ry="7" fill="#9a80b8" /><ellipse cx="60" cy="90" rx="22" ry="6" fill="#b8a0c8" /><polygon points="34,55 38,37 44,40 44,75 34,75" fill="#d03828" /><polygon points="44,52 85,30 85,78 44,75" fill="#e03828" /><polygon points="42,52 85,12 88,28 50,56" fill="#7a8838" /><polygon points="85,10 100,0 100,62 85,72" fill="#e04028" /><polygon points="38,37 50,38 46,50" fill="#5a5a60" /><polygon points="88,60 100,40 100,62 88,62" fill="#8a8a80" /><rect x="58" y="56" width="6" height="18" fill="#a07848" /><rect x="93" y="70" width="6" height="14" fill="#c8d0c0" /></svg></g></svg>
<svg class="a" style="left:2479px;top:352px" width="10" height="10"><path d="M0.5 0.5 L9.5 9.5 M9.5 0.5 L0.5 9.5" stroke="#e5e7eb" stroke-width="1.4"/></svg>
<svg class="a" style="left:1500px;top:1070px" width="780" height="55" viewBox="1500 1070 780 55"><defs><linearGradient id="tg00" x1="0" y1="0" x2="0" y2="1"><stop offset="0" stop-color="#7c3f8e"/><stop offset="0.2" stop-color="#b86cb4"/><stop offset="0.36" stop-color="#dc98c4"/><stop offset="0.47" stop-color="#f0d0b8"/><stop offset="0.55" stop-color="#c890b8"/><stop offset="0.7" stop-color="#a060a8"/></linearGradient><linearGradient id="tg01" x1="0" y1="0" x2="0" y2="1"><stop offset="0" stop-color="#2c7cd0"/><stop offset="0.45" stop-color="#6cb0e0"/><stop offset="0.55" stop-color="#88bcd8"/></linearGradient><linearGradient id="tg02" x1="0" y1="0" x2="1" y2="1"><stop offset="0" stop-color="#2a5cc8"/><stop offset="1" stop-color="#5a88d8"/></linearGradient><linearGradient id="tg03" x1="0" y1="0" x2="0" y2="1"><stop offset="0" stop-color="#d8c89c"/><stop offset="0.35" stop-color="#e8e2bc"/><stop offset="0.52" stop-color="#dcc09a"/><stop offset="0.6" stop-color="#e07848"/><stop offset="0.7" stop-color="#7a4a3c"/><stop offset="0.85" stop-color="#4a3c38"/><stop offset="1" stop-color="#3c3430"/></linearGradient><linearGradient id="tg10" x1="0" y1="0" x2="0" y2="1"><stop offset="0" stop-color="#1c5ec0"/><stop offset="0.48" stop-color="#70b8e4"/></linearGradient><linearGradient id="thill10" x1="0" y1="0" x2="0.3" y2="1"><stop offset="0" stop-color="#d8a848"/><stop offset="0.5" stop-color="#c88030"/><stop offset="1" stop-color="#b05820"/></linearGradient><linearGradient id="tg11" x1="0" y1="0" x2="0" y2="1"><stop offset="0" stop-color="#6c98b8"/><stop offset="0.5" stop-color="#7ca2bc"/></linearGradient><linearGradient id="tg12" x1="0" y1="0" x2="0" y2="1"><stop offset="0" stop-color="#5c9ae0"/><stop offset="0.36" stop-color="#dce6f0"/><stop offset="0.47" stop-color="#f08888"/><stop offset="0.55" stop-color="#f0a040"/><stop offset="0.62" stop-color="#e0c040"/><stop offset="0.7" stop-color="#5a9a40"/></linearGradient><linearGradient id="tg13" x1="0" y1="0" x2="0" y2="1"><stop offset="0" stop-color="#4a7ac0"/><stop offset="0.22" stop-color="#5a80c8"/><stop offset="0.38" stop-color="#d890b8"/><stop offset="0.48" stop-color="#e0a0a0"/><stop offset="0.56" stop-color="#d08048"/><stop offset="0.66" stop-color="#3a3028"/></linearGradient><radialGradient id="tsun13"><stop offset="0" stop-color="#fffff0"/><stop offset="0.4" stop-color="#f0e880"/><stop offset="1" stop-color="#e0d070" stop-opacity="0"/></radialGradient><linearGradient id="tg20" x1="0" y1="0" x2="0" y2="1"><stop offset="0" stop-color="#d8d0c4"/><stop offset="0.15" stop-color="#9ab0c8"/><stop offset="0.25" stop-color="#6a98c8"/><stop offset="0.38" stop-color="#c8c4bc"/><stop offset="0.5" stop-color="#90a0b8"/><stop offset="0.6" stop-color="#8890a0"/><stop offset="0.7" stop-color="#5a6070"/></linearGradient><linearGradient id="tg21" x1="0" y1="0" x2="0" y2="1"><stop offset="0" stop-color="#b4aae0"/><stop offset="0.25" stop-color="#9c98d4"/><stop offset="0.46" stop-color="#5e70b0"/></linearGradient><linearGradient id="tg22" x1="0" y1="0" x2="0" y2="1"><stop offset="0" stop-color="#b4b4ac"/><stop offset="0.3" stop-color="#cccac0"/><stop offset="0.45" stop-color="#b8b8b0"/></linearGradient><linearGradient id="tg23" x1="0" y1="0" x2="0" y2="1"><stop offset="0" stop-color="#3a80c8"/><stop offset="0.6" stop-color="#88bcdc"/></linearGradient><linearGradient id="tg30" x1="0" y1="0" x2="0" y2="1"><stop offset="0" stop-color="#7a8848"/><stop offset="0.2" stop-color="#5a8a48"/><stop offset="0.45" stop-color="#2a6a50"/><stop offset="0.55" stop-color="#4a6a40"/></linearGradient><linearGradient id="tg31" x1="0" y1="0" x2="1" y2="0"><stop offset="0" stop-color="#9a9aa2"/><stop offset="0.5" stop-color="#b4b8c2"/><stop offset="1" stop-color="#a8acb6"/></linearGradient><linearGradient id="tg32" x1="0" y1="0" x2="0" y2="1"><stop offset="0" stop-color="#2a2520"/><stop offset="0.18" stop-color="#6a4a28"/><stop offset="0.34" stop-color="#c88838"/><stop offset="0.46" stop-color="#f0b040"/><stop offset="0.52" stop-color="#e8b868"/><stop offset="0.56" stop-color="#806048"/><stop offset="0.7" stop-color="#4a4028"/><stop offset="1" stop-color="#3a3420"/></linearGradient><radialGradient id="tsun32"><stop offset="0" stop-color="#ffffff"/><stop offset="0.3" stop-color="#ffe890"/><stop offset="1" stop-color="#f0b040" stop-opacity="0"/></radialGradient><linearGradient id="tg33" x1="0" y1="0" x2="0" y2="1"><stop offset="0" stop-color="#3a70b8"/><stop offset="0.28" stop-color="#6a98c8"/><stop offset="0.42" stop-color="#c8d8e8"/><stop offset="0.48" stop-color="#90a8c0"/></linearGradient><clipPath id="tc"><rect x="0" y="0" width="100" height="100" rx="8"/></clipPath></defs><svg x="1513" y="1079" width="36" height="36" viewBox="0 0 100 100" preserveAspectRatio="none"><g clip-path="url(#tc)"><svg x="0" y="0" width="25" height="25" viewBox="0 0 100 100" preserveAspectRatio="none"><rect x="-6" y="-6" width="112" height="112" fill="url(#tg00)" /><polygon points="0,52 12,48 25,50 38,53 38,72 0,72" fill="#a468a8" /><ellipse cx="18" cy="64" rx="22" ry="8" fill="#9a4ea0" /><polygon points="0,68 14,69 14,74 0,78" fill="#5c7a4a" /><polygon points="0,100 0,80 12,72 24,74 55,100" fill="#8c8490" /><polygon points="24,74 30,74 62,100 55,100" fill="#6a7a52" /><polygon points="36,58 40,36 52,38 52,80 38,80" fill="#e6d2c0" /><polygon points="36,48 40,36 52,37 50,50" fill="#c07898" /><polygon points="48,46 76,22 76,84 48,80" fill="#dcc6a0" /><polygon points="47,47 66,22 80,21 58,44" fill="#a84868" /><polygon points="70,40 100,4 100,92 70,90" fill="#c8a878" /><polygon points="68,40 100,2 100,9 73,43" fill="#3c2c2a" /><polygon points="76,60 100,47 100,62 80,66" fill="#7a4468" /><rect x="50" y="52" width="3" height="12" fill="#6a5a5a" /><rect x="56" y="50" width="3" height="12" fill="#6a5a5a" /><rect x="62" y="48" width="3" height="14" fill="#6a5a5a" /><rect x="84" y="20" width="3" height="18" fill="#5a4a48" /><rect x="92" y="16" width="3" height="20" fill="#5a4a48" /><rect x="82" y="66" width="8" height="20" fill="#e8e8f0" /><rect x="93" y="66" width="7" height="22" fill="#e0e0e8" /><rect x="75" y="66" width="4" height="16" fill="#4a70b0" /><ellipse cx="55" cy="86" rx="10" ry="8" fill="#906070" /><ellipse cx="66" cy="90" rx="8" ry="7" fill="#8a5a60" /><ellipse cx="83" cy="90" rx="12" ry="10" fill="#b874c0" /><ellipse cx="74" cy="98" rx="10" ry="4" fill="#a870b8" /></svg><svg x="25" y="0" width="25" height="25" viewBox="0 0 100 100" preserveAspectRatio="none"><rect x="-6" y="-6" width="112" height="112" fill="url(#tg01)" /><ellipse cx="20" cy="46" rx="16" ry="9" fill="#8aa870" /><ellipse cx="10" cy="60" rx="14" ry="14" fill="#b8b050" /><polygon points="10,52 36,47 36,72 10,72" fill="#c8a870" /><polygon points="10,53 12,48 36,46 36,54" fill="#6a5a5a" /><polygon points="0,68 36,68 36,73 0,73" fill="#a05a48" /><polygon points="34,73 38,38 44,38 48,73" fill="#c07848" /><polygon points="36,40 38,37 46,40 40,50" fill="#3a3030" /><polygon points="46,48 90,14 100,12 100,100 82,100 46,76" fill="#d08a58" /><polygon points="44,50 62,34 92,13 92,20 50,52" fill="#6a5e62" /><rect x="76" y="3" width="4" height="10" fill="#b06040" /><polygon points="84,34 90,32 92,92 86,92" fill="#5a8a3a" /><polygon points="87,64 100,47 100,57 92,65" fill="#d04838" /><polygon points="0,73 46,74 86,100 0,100" fill="#d8b070" /><polygon points="0,95 60,92 86,100 0,100" fill="#e0a060" /><rect x="95" y="20" width="4" height="14" fill="#4a70b0" /><rect x="94" y="72" width="4" height="14" fill="#4a70b0" /><rect x="60" y="62" width="3" height="10" fill="#3a3030" /></svg><svg x="50" y="0" width="25" height="25" viewBox="0 0 100 100" preserveAspectRatio="none"><rect x="-6" y="-6" width="112" height="112" fill="#4c6a50" /><polygon points="0,0 50,0 42,18 0,28" fill="url(#tg02)" /><polygon points="40,0 100,0 100,34 64,26" fill="#586e50" /><polygon points="0,28 28,18 55,14 62,26 40,38 0,40" fill="#c4c4bc" /><polygon points="0,36 45,34 42,56 0,56" fill="#5a8858" /><polygon points="0,52 36,47 36,68 0,62" fill="#b03c3c" /><polygon points="2,52 36,47 36,50 2,55" fill="#8ab0c8" /><polygon points="0,62 30,70 48,80 80,90 100,94 100,100 0,100" fill="#a8a49c" /><polygon points="30,70 48,80 80,90 80,92 46,82 30,72" fill="#e0e0e0" /><polygon points="47,47 72,43 72,84 47,76" fill="#8a1e22" /><polygon points="72,43 88,15 100,34 100,92 80,90 72,84" fill="#5a1416" /><rect x="49" y="47" width="2.5" height="29" fill="#c83434" /><rect x="55" y="46" width="2.5" height="31" fill="#c83434" /><rect x="61" y="45" width="2.5" height="33" fill="#c83434" /><rect x="67" y="44" width="2.5" height="35" fill="#c83434" /><polygon points="44,47 86,15 90,19 72,42 48,47" fill="#dcdcd4" /><polygon points="34,56 39,38 48,40 48,52" fill="#b0bcc8" /><polygon points="76,62 100,42 100,60 80,63" fill="#d4d4d0" /></svg><svg x="75" y="0" width="25" height="25" viewBox="0 0 100 100" preserveAspectRatio="none"><rect x="-6" y="-6" width="112" height="112" fill="url(#tg03)" /><ellipse cx="8" cy="8" rx="8" ry="6" fill="#a8b8a8" /><polygon points="33,56 36,40 46,38 56,44 56,90 34,86" fill="#6a5038" /><polygon points="32,40 37,36 58,38 56,50 36,54" fill="#3a3a40" /><rect x="40" y="58" width="4" height="20" fill="#3a2a24" /><polygon points="56,56 62,18 70,0 100,0 100,100 58,96" fill="#6a4a38" /><polygon points="68,0 100,0 100,14 82,10" fill="#5c3a30" /><polygon points="70,12 80,8 80,32 70,34" fill="#8a6a50" /><polygon points="54,54 70,38 84,44 70,56" fill="#3a3c48" /><polygon points="74,50 92,16 98,22 80,54" fill="#3c4c68" /><polygon points="86,60 100,44 100,60 88,62" fill="#3a6a9a" /><polygon points="76,55 88,50 88,90 76,88" fill="#8a6044" /><rect x="86" y="44" width="4" height="36" fill="#b05034" /><rect x="92" y="62" width="8" height="30" fill="#a07040" /><rect x="78" y="60" width="6" height="18" fill="#3a2a24" /></svg><svg x="0" y="25" width="25" height="25" viewBox="0 0 100 100" preserveAspectRatio="none"><rect x="-6" y="-6" width="112" height="112" fill="url(#tg10)" /><polygon points="-6,49 10,47 36,45 40,106 -6,106" fill="url(#thill10)" /><ellipse cx="14" cy="58" rx="12" ry="2.6" fill="#70884a" /><polygon points="34,106 36,33 38,32 56,32 48,50 48,106" fill="#e8b030" /><polygon points="37,33 56,32 46,48 40,36" fill="#c86820" /><polygon points="45,48 88,12 106,30 106,106 45,106" fill="#e6b030" /><polygon points="42,50 60,36 87,11 80,26 46,55" fill="#1c2a30" /><polygon points="44,54 80,26 82,28 46,57" fill="#f0e8d0" /><polygon points="88,12 100,30 100,36 86,18" fill="#f0e8d0" /><polygon points="76,58 100,42 100,56 80,66" fill="#1a2030" /><rect x="52" y="54" width="5" height="24" fill="#c8d0d8" /><rect x="60" y="54" width="6" height="20" fill="#c8d0d8" /><rect x="37" y="57" width="4" height="10" fill="#c8d0d8" /><rect x="85" y="26" width="3" height="12" fill="#1a1a20" /><rect x="48" y="60" width="3" height="18" fill="#6a3020" /><polygon points="22,66 36,72 45,76 62,86 82,94 106,90 106,106 28,106" fill="#2c4a38" /><ellipse cx="50" cy="88" rx="12" ry="6" fill="#3a5a40" /></svg><svg x="25" y="25" width="25" height="25" viewBox="0 0 100 100" preserveAspectRatio="none"><rect x="-6" y="-6" width="112" height="112" fill="url(#tg11)" /><polygon points="-6,49 20,47 36,49 36,74 -6,74" fill="#78a058" /><ellipse cx="10" cy="62" rx="16" ry="10" fill="#6a9050" /><polygon points="-6,72 106,72 106,106 -6,106" fill="#8aa060" /><polygon points="36,86 106,84 106,106 30,106" fill="#a08868" /><ellipse cx="6" cy="72" rx="8" ry="10" fill="#b08080" /><ellipse cx="10" cy="88" rx="10" ry="5" fill="#5a7a48" /><polygon points="34,80 35,45 39,37 45,44 45,80" fill="#8a7870" /><polygon points="38,38 60,24 74,20 72,28 46,52" fill="#8a9a88" /><rect x="48" y="25" width="9" height="17" fill="#a04a38" /><polygon points="45,50 73,40 73,84 45,80" fill="#a86450" /><rect x="50" y="52" width="6" height="22" fill="#4a5058" /><rect x="59" y="50" width="6" height="22" fill="#4a5058" /><polygon points="72,40 88,14 100,16 106,18 106,70 73,84" fill="#a87868" /><rect x="82" y="-6" width="7" height="21" fill="#b05040" /><polygon points="90,6 106,6 106,20 92,16" fill="#c04030" /><polygon points="78,62 106,42 106,106 80,100" fill="#8a8070" /><polygon points="78,62 106,40 106,50 82,66" fill="#8c9c8a" /><rect x="92" y="66" width="6" height="30" fill="#4a3a38" /></svg><svg x="50" y="25" width="25" height="25" viewBox="0 0 100 100" preserveAspectRatio="none"><rect x="-6" y="-6" width="112" height="112" fill="url(#tg12)" /><polygon points="68,0 100,0 100,62 86,46 64,26" fill="#4a8a38" /><polygon points="0,62 36,62 36,82 0,82" fill="#4a8a40" /><ellipse cx="14" cy="68" rx="10" ry="5" fill="#d04858" /><polygon points="35,55 40,36 50,38 52,50 70,22 70,84 36,80" fill="#9a80d0" /><polygon points="42,50 70,18 88,16 58,48" fill="#b8a8e0" /><rect x="50" y="25" width="5" height="14" fill="#7a4a40" /><polygon points="70,20 88,15 90,86 70,86" fill="#c83828" /><polygon points="80,60 100,60 100,90 80,88" fill="#e8a040" /><polygon points="78,60 100,44 100,60" fill="#4a8a38" /><rect x="83" y="64" width="5" height="22" fill="#e84830" /><rect x="92" y="62" width="6" height="12" fill="#3a6ad0" /><rect x="46" y="52" width="4" height="8" fill="#f0f0f0" /><rect x="58" y="50" width="5" height="9" fill="#f0f0f0" /><rect x="46" y="64" width="4" height="9" fill="#f0f0f0" /><rect x="58" y="64" width="5" height="10" fill="#f0f0f0" /><polygon points="0,78 36,76 100,88 100,100 0,100" fill="#a650a8" /><polygon points="40,85 90,90 100,100 60,100" fill="#c060a0" /></svg><svg x="75" y="25" width="25" height="25" viewBox="0 0 100 100" preserveAspectRatio="none"><rect x="-6" y="-6" width="112" height="112" fill="url(#tg13)" /><ellipse cx="12" cy="10" rx="14" ry="12" fill="url(#tsun13)" /><polygon points="0,62 40,66 70,95 40,100 0,100" fill="#4a6a50" /><polygon points="0,72 30,78 55,100 0,100" fill="#5a8a88" /><polygon points="33,57 42,40 60,35 72,18 86,26 100,42 100,100 36,90" fill="#2c5a80" /><polygon points="40,42 72,16 88,28 52,50" fill="#2a1a20" /><polygon points="72,22 98,46 98,82 72,86" fill="#c8a040" /><polygon points="36,58 44,52 44,90 36,88" fill="#8a2a28" /><rect x="88" y="64" width="12" height="32" fill="#8a2a28" /><rect x="48" y="52" width="5" height="10" fill="#e8c060" /><rect x="56" y="50" width="4" height="10" fill="#e8c060" /><rect x="64" y="48" width="4" height="10" fill="#e8c060" /><rect x="52" y="68" width="4" height="12" fill="#e8c060" /><rect x="62" y="66" width="4" height="12" fill="#e8c060" /><rect x="80" y="66" width="5" height="10" fill="#e8c060" /><ellipse cx="62" cy="88" rx="16" ry="6" fill="#b070a0" /></svg><svg x="0" y="50" width="25" height="25" viewBox="0 0 100 100" preserveAspectRatio="none"><rect x="-6" y="-6" width="112" height="112" fill="url(#tg20)" /><polygon points="0,65 10,65 10,72 0,72" fill="#3a4050" /><polygon points="10,68 34,68 34,73 10,73" fill="#6a7060" /><polygon points="0,72 35,72 65,80 100,94 100,100 0,100" fill="#6a6068" /><polygon points="0,92 16,73 18,73 2,96" fill="#d8d8d8" /><polygon points="34,74 36,40 40,37 50,40 50,48 72,22 88,12 100,0 100,86 80,82 50,78" fill="#b86a30" /><polygon points="40,37 55,37 48,52 42,50" fill="#5a2a20" /><polygon points="48,48 70,22 88,12 72,32 56,46" fill="#8a3a1c" /><polygon points="70,30 88,14 88,80 70,78" fill="#8a4a28" /><polygon points="78,60 100,45 100,56 82,62" fill="#b02820" /><rect x="52" y="48" width="6" height="8" fill="#f0f0f0" /><rect x="52" y="64" width="6" height="9" fill="#e8e8e8" /><rect x="91" y="24" width="4" height="8" fill="#f0f0f0" /><rect x="88" y="72" width="4" height="12" fill="#f0f0f0" /><rect x="37" y="66" width="7" height="9" fill="#f0f0f0" /></svg><svg x="25" y="50" width="25" height="25" viewBox="0 0 100 100" preserveAspectRatio="none"><rect x="-6" y="-6" width="112" height="112" fill="url(#tg21)" /><ellipse cx="20" cy="20" rx="22" ry="12" fill="#b8b0e4" /><polygon points="-6,47 38,45 40,54 -6,56" fill="#e8e6f2" /><polygon points="-6,55 36,54 36,70 -6,72" fill="#5a5a62" /><rect x="12" y="55" width="2" height="14" fill="#c8c8d0" /><rect x="20" y="55" width="2" height="14" fill="#b8b8c0" /><polygon points="35,52 72,42 100,30 100,88 80,92 35,72" fill="#4c4c54" /><polygon points="72,40 100,4 100,62 72,60" fill="#3e3e46" /><rect x="36" y="52" width="3" height="22" fill="#d8d8e0" /><rect x="45" y="50" width="3" height="26" fill="#d8d8e0" /><rect x="56" y="48" width="3" height="30" fill="#d8d8e0" /><rect x="72" y="42" width="4" height="40" fill="#e0e0e8" /><rect x="90" y="18" width="3" height="26" fill="#c8c8d0" /><polygon points="26,58 38,42 44,48 36,60" fill="#e8e6f2" /><polygon points="45,50 47,45 90,0 100,0 100,4 72,40" fill="#e6e2f4" /><rect x="52" y="25" width="6" height="13" fill="#8a8a92" /><polygon points="76,62 100,42 100,62" fill="#eceaf6" /><polygon points="-6,70 25,70 45,80 75,106 -6,106" fill="#dccdee" /><polygon points="25,70 45,80 75,106 100,106 100,88 80,92 36,72" fill="#7c8290" /></svg><svg x="50" y="50" width="25" height="25" viewBox="0 0 100 100" preserveAspectRatio="none"><rect x="-6" y="-6" width="112" height="112" fill="url(#tg22)" /><polygon points="0,49 30,45 36,49 36,68 0,68" fill="#a8a090" /><polygon points="0,50 30,45 36,50 0,54" fill="#5a5848" /><polygon points="0,64 100,76 100,100 0,100" fill="#8a8070" /><polygon points="0,66 36,68 36,90 0,90" fill="#7a6a60" /><polygon points="36,76 37,37 40,36 47,42 47,76" fill="#b0aca0" /><polygon points="46,54 72,38 72,84 46,80" fill="#c4c0b4" /><polygon points="45,53 88,3 96,8 56,56" fill="#8c8c8a" /><polygon points="72,38 90,8 100,24 100,82 72,84" fill="#5c4c42" /><polygon points="80,60 100,42 100,50 82,62" fill="#7a7068" /><rect x="58" y="50" width="4" height="22" fill="#4a3a30" /><rect x="48" y="62" width="4" height="14" fill="#4a3a30" /></svg><svg x="75" y="50" width="25" height="25" viewBox="0 0 100 100" preserveAspectRatio="none"><rect x="-6" y="-6" width="112" height="112" fill="url(#tg23)" /><polygon points="-6,40 12,48 28,58 30,80 -6,92" fill="#c89060" /><polygon points="-6,40 12,48 14,54 -6,48" fill="#b86848" /><polygon points="28,54 36,50 42,76 30,78" fill="#e0c8a8" /><polygon points="30,54 34,50 42,52 40,58" fill="#c04030" /><polygon points="35,48 50,36 56,16 80,0 106,-6 106,94 40,74" fill="#d88850" /><polygon points="70,36 86,26 86,80 70,76" fill="#c8c840" /><polygon points="38,40 46,38 50,50 40,52" fill="#b83020" /><polygon points="54,17 70,2 90,4 76,18" fill="#b06040" /><rect x="79" y="16" width="4" height="8" fill="#2a4a9a" /><polygon points="30,78 40,72 56,82 72,106 18,106" fill="#a8a8c4" /><polygon points="-6,92 30,78 18,106 -6,106" fill="#c88868" /><polygon points="56,82 106,92 106,106 72,106" fill="#c87848" /><rect x="90" y="62" width="8" height="20" fill="#2a3a5a" /><rect x="72" y="70" width="6" height="16" fill="#3aa060" /><rect x="58" y="56" width="5" height="18" fill="#3a6ac0" /></svg><svg x="0" y="75" width="25" height="25" viewBox="0 0 100 100" preserveAspectRatio="none"><rect x="-6" y="-6" width="112" height="112" fill="url(#tg30)" /><ellipse cx="20" cy="15" rx="8" ry="4" fill="#80b880" /><ellipse cx="60" cy="10" rx="14" ry="6" fill="#8a9a48" /><ellipse cx="12" cy="40" rx="14" ry="8" fill="#3a7a58" /><polygon points="0,53 35,51 35,58 0,61" fill="#a02838" /><polygon points="2,59 35,56 35,70 2,68" fill="#e8e4c8" /><polygon points="33,60 39,38 44,46 44,80 33,76" fill="#c83c3c" /><polygon points="43,47 70,41 70,82 43,79" fill="#f2eed8" /><polygon points="42,47 62,28 85,16 70,41" fill="#c8c0e8" /><polygon points="70,41 85,16 100,38 100,60 82,58 70,60" fill="#e0d090" /><rect x="52" y="22" width="5" height="16" fill="#b04838" /><polygon points="80,58 100,45 100,86 80,83" fill="#c83030" /><rect x="47" y="52" width="3" height="6" fill="#8a8a80" /><rect x="55" y="50" width="3" height="6" fill="#8a8a80" /><rect x="62" y="48" width="3" height="6" fill="#8a8a80" /><rect x="76" y="26" width="5" height="9" fill="#c08070" /><polygon points="0,62 30,70 60,82 100,86 100,106 -6,106" fill="#b84a20" /><polygon points="0,80 40,86 60,106 -6,106" fill="#a03a18" /></svg><svg x="25" y="75" width="25" height="25" viewBox="0 0 100 100" preserveAspectRatio="none"><rect x="-6" y="-6" width="112" height="112" fill="url(#tg31)" /><polygon points="0,0 10,0 0,5" fill="#d8d0c8" /><polygon points="0,6 22,0 40,0 36,30 26,50 0,50" fill="#a89078" /><ellipse cx="14" cy="24" rx="9" ry="14" fill="#c8a880" /><ellipse cx="30" cy="36" rx="6" ry="10" fill="#c0a888" /><ellipse cx="6" cy="14" rx="5" ry="4" fill="#e0c8a8" /><ellipse cx="62" cy="14" rx="16" ry="10" fill="#cfd3dc" /><ellipse cx="82" cy="30" rx="12" ry="8" fill="#c4c8d2" /><ellipse cx="50" cy="34" rx="10" ry="8" fill="#8a8a90" /><polygon points="0,48 30,48 40,46 40,76 0,76" fill="#a4b0c4" /><ellipse cx="12" cy="60" rx="8" ry="9" fill="#7c889c" /><ellipse cx="28" cy="66" rx="6" ry="7" fill="#8a96a8" /><polygon points="46,46 78,20 100,14 100,86 46,80" fill="#9c8a7a" /><polygon points="35,78 36,40 46,45 46,80" fill="#d8b050" /><polygon points="35,41 40,37 50,47 46,49" fill="#f2f2f8" /><polygon points="46,46 62,30 80,16 100,12 100,20 80,26 50,50" fill="#f4f4fa" /><polygon points="72,36 82,30 100,30 100,48 82,48 72,50" fill="#e2e2ea" /><polygon points="70,56 100,46 100,60 72,64" fill="#f0f0f6" /><rect x="88" y="24" width="10" height="14" fill="#4a4038" /><rect x="56" y="52" width="6" height="12" fill="#5a4a40" /><polygon points="-6,74 46,77 100,86 100,106 -6,106" fill="#eeeef4" /></svg><svg x="50" y="75" width="25" height="25" viewBox="0 0 100 100" preserveAspectRatio="none"><rect x="-6" y="-6" width="112" height="112" fill="url(#tg32)" /><ellipse cx="16" cy="48" rx="20" ry="18" fill="url(#tsun32)" /><polygon points="0,66 100,74 100,100 0,100" fill="#4a4828" /><polygon points="34,50 72,38 72,80 34,72" fill="#a88050" /><rect x="37" y="54" width="4" height="16" fill="#d8b070" /><rect x="46" y="52" width="4" height="20" fill="#d8b070" /><rect x="54" y="48" width="4" height="24" fill="#d8b070" /><rect x="62" y="46" width="4" height="28" fill="#d8b070" /><polygon points="32,50 92,12 100,22 72,38" fill="#8a6a40" /><polygon points="72,38 92,12 100,22 100,84 72,80" fill="#3a3028" /><polygon points="34,72 72,80 100,82 100,92 40,88" fill="#4a5030" /></svg><svg x="75" y="75" width="25" height="25" viewBox="0 0 100 100" preserveAspectRatio="none"><rect x="-6" y="-6" width="112" height="112" fill="url(#tg33)" /><polygon points="0,47 20,45 36,47 36,68 0,68" fill="#5a8a38" /><ellipse cx="12" cy="56" rx="12" ry="8" fill="#3a6a2a" /><polygon points="0,64 100,70 100,100 0,100" fill="#a8b050" /><ellipse cx="16" cy="70" rx="18" ry="7" fill="#9a80b8" /><ellipse cx="60" cy="90" rx="22" ry="6" fill="#b8a0c8" /><polygon points="34,55 38,37 44,40 44,75 34,75" fill="#d03828" /><polygon points="44,52 85,30 85,78 44,75" fill="#e03828" /><polygon points="42,52 85,12 88,28 50,56" fill="#7a8838" /><polygon points="85,10 100,0 100,62 85,72" fill="#e04028" /><polygon points="38,37 50,38 46,50" fill="#5a5a60" /><polygon points="88,60 100,40 100,62 88,62" fill="#8a8a80" /><rect x="58" y="56" width="6" height="18" fill="#a07848" /><rect x="93" y="70" width="6" height="14" fill="#c8d0c0" /></svg></g></svg><rect x="1511.5" y="1077.5" width="39" height="39" rx="6" fill="none" stroke="#f97316" stroke-width="2.5"/><svg x="1556" y="1080" width="34" height="34" viewBox="0 0 100 100" preserveAspectRatio="none"><g clip-path="url(#tc)"><rect x="-6" y="-6" width="112" height="112" fill="url(#tg00)" /><polygon points="0,52 12,48 25,50 38,53 38,72 0,72" fill="#a468a8" /><ellipse cx="18" cy="64" rx="22" ry="8" fill="#9a4ea0" /><polygon points="0,68 14,69 14,74 0,78" fill="#5c7a4a" /><polygon points="0,100 0,80 12,72 24,74 55,100" fill="#8c8490" /><polygon points="24,74 30,74 62,100 55,100" fill="#6a7a52" /><polygon points="36,58 40,36 52,38 52,80 38,80" fill="#e6d2c0" /><polygon points="36,48 40,36 52,37 50,50" fill="#c07898" /><polygon points="48,46 76,22 76,84 48,80" fill="#dcc6a0" /><polygon points="47,47 66,22 80,21 58,44" fill="#a84868" /><polygon points="70,40 100,4 100,92 70,90" fill="#c8a878" /><polygon points="68,40 100,2 100,9 73,43" fill="#3c2c2a" /><polygon points="76,60 100,47 100,62 80,66" fill="#7a4468" /><rect x="50" y="52" width="3" height="12" fill="#6a5a5a" /><rect x="56" y="50" width="3" height="12" fill="#6a5a5a" /><rect x="62" y="48" width="3" height="14" fill="#6a5a5a" /><rect x="84" y="20" width="3" height="18" fill="#5a4a48" /><rect x="92" y="16" width="3" height="20" fill="#5a4a48" /><rect x="82" y="66" width="8" height="20" fill="#e8e8f0" /><rect x="93" y="66" width="7" height="22" fill="#e0e0e8" /><rect x="75" y="66" width="4" height="16" fill="#4a70b0" /><ellipse cx="55" cy="86" rx="10" ry="8" fill="#906070" /><ellipse cx="66" cy="90" rx="8" ry="7" fill="#8a5a60" /><ellipse cx="83" cy="90" rx="12" ry="10" fill="#b874c0" /><ellipse cx="74" cy="98" rx="10" ry="4" fill="#a870b8" /></g></svg><rect x="1556.5" y="1080.5" width="33" height="33" rx="4" fill="none" stroke="#d1d5db" stroke-opacity="0.6" stroke-width="1"/><svg x="1598" y="1080" width="34" height="34" viewBox="0 0 100 100" preserveAspectRatio="none"><g clip-path="url(#tc)"><rect x="-6" y="-6" width="112" height="112" fill="url(#tg01)" /><ellipse cx="20" cy="46" rx="16" ry="9" fill="#8aa870" /><ellipse cx="10" cy="60" rx="14" ry="14" fill="#b8b050" /><polygon points="10,52 36,47 36,72 10,72" fill="#c8a870" /><polygon points="10,53 12,48 36,46 36,54" fill="#6a5a5a" /><polygon points="0,68 36,68 36,73 0,73" fill="#a05a48" /><polygon points="34,73 38,38 44,38 48,73" fill="#c07848" /><polygon points="36,40 38,37 46,40 40,50" fill="#3a3030" /><polygon points="46,48 90,14 100,12 100,100 82,100 46,76" fill="#d08a58" /><polygon points="44,50 62,34 92,13 92,20 50,52" fill="#6a5e62" /><rect x="76" y="3" width="4" height="10" fill="#b06040" /><polygon points="84,34 90,32 92,92 86,92" fill="#5a8a3a" /><polygon points="87,64 100,47 100,57 92,65" fill="#d04838" /><polygon points="0,73 46,74 86,100 0,100" fill="#d8b070" /><polygon points="0,95 60,92 86,100 0,100" fill="#e0a060" /><rect x="95" y="20" width="4" height="14" fill="#4a70b0" /><rect x="94" y="72" width="4" height="14" fill="#4a70b0" /><rect x="60" y="62" width="3" height="10" fill="#3a3030" /></g></svg><rect x="1598.5" y="1080.5" width="33" height="33" rx="4" fill="none" stroke="#d1d5db" stroke-opacity="0.6" stroke-width="1"/><svg x="1640" y="1080" width="34" height="34" viewBox="0 0 100 100" preserveAspectRatio="none"><g clip-path="url(#tc)"><rect x="-6" y="-6" width="112" height="112" fill="#4c6a50" /><polygon points="0,0 50,0 42,18 0,28" fill="url(#tg02)" /><polygon points="40,0 100,0 100,34 64,26" fill="#586e50" /><polygon points="0,28 28,18 55,14 62,26 40,38 0,40" fill="#c4c4bc" /><polygon points="0,36 45,34 42,56 0,56" fill="#5a8858" /><polygon points="0,52 36,47 36,68 0,62" fill="#b03c3c" /><polygon points="2,52 36,47 36,50 2,55" fill="#8ab0c8" /><polygon points="0,62 30,70 48,80 80,90 100,94 100,100 0,100" fill="#a8a49c" /><polygon points="30,70 48,80 80,90 80,92 46,82 30,72" fill="#e0e0e0" /><polygon points="47,47 72,43 72,84 47,76" fill="#8a1e22" /><polygon points="72,43 88,15 100,34 100,92 80,90 72,84" fill="#5a1416" /><rect x="49" y="47" width="2.5" height="29" fill="#c83434" /><rect x="55" y="46" width="2.5" height="31" fill="#c83434" /><rect x="61" y="45" width="2.5" height="33" fill="#c83434" /><rect x="67" y="44" width="2.5" height="35" fill="#c83434" /><polygon points="44,47 86,15 90,19 72,42 48,47" fill="#dcdcd4" /><polygon points="34,56 39,38 48,40 48,52" fill="#b0bcc8" /><polygon points="76,62 100,42 100,60 80,63" fill="#d4d4d0" /></g></svg><rect x="1640.5" y="1080.5" width="33" height="33" rx="4" fill="none" stroke="#d1d5db" stroke-opacity="0.6" stroke-width="1"/><svg x="1682" y="1080" width="34" height="34" viewBox="0 0 100 100" preserveAspectRatio="none"><g clip-path="url(#tc)"><rect x="-6" y="-6" width="112" height="112" fill="url(#tg03)" /><ellipse cx="8" cy="8" rx="8" ry="6" fill="#a8b8a8" /><polygon points="33,56 36,40 46,38 56,44 56,90 34,86" fill="#6a5038" /><polygon points="32,40 37,36 58,38 56,50 36,54" fill="#3a3a40" /><rect x="40" y="58" width="4" height="20" fill="#3a2a24" /><polygon points="56,56 62,18 70,0 100,0 100,100 58,96" fill="#6a4a38" /><polygon points="68,0 100,0 100,14 82,10" fill="#5c3a30" /><polygon points="70,12 80,8 80,32 70,34" fill="#8a6a50" /><polygon points="54,54 70,38 84,44 70,56" fill="#3a3c48" /><polygon points="74,50 92,16 98,22 80,54" fill="#3c4c68" /><polygon points="86,60 100,44 100,60 88,62" fill="#3a6a9a" /><polygon points="76,55 88,50 88,90 76,88" fill="#8a6044" /><rect x="86" y="44" width="4" height="36" fill="#b05034" /><rect x="92" y="62" width="8" height="30" fill="#a07040" /><rect x="78" y="60" width="6" height="18" fill="#3a2a24" /></g></svg><rect x="1682.5" y="1080.5" width="33" height="33" rx="4" fill="none" stroke="#d1d5db" stroke-opacity="0.6" stroke-width="1"/><svg x="1724" y="1080" width="34" height="34" viewBox="0 0 100 100" preserveAspectRatio="none"><g clip-path="url(#tc)"><rect x="-6" y="-6" width="112" height="112" fill="url(#tg10)" /><polygon points="-6,49 10,47 36,45 40,106 -6,106" fill="url(#thill10)" /><ellipse cx="14" cy="58" rx="12" ry="2.6" fill="#70884a" /><polygon points="34,106 36,33 38,32 56,32 48,50 48,106" fill="#e8b030" /><polygon points="37,33 56,32 46,48 40,36" fill="#c86820" /><polygon points="45,48 88,12 106,30 106,106 45,106" fill="#e6b030" /><polygon points="42,50 60,36 87,11 80,26 46,55" fill="#1c2a30" /><polygon points="44,54 80,26 82,28 46,57" fill="#f0e8d0" /><polygon points="88,12 100,30 100,36 86,18" fill="#f0e8d0" /><polygon points="76,58 100,42 100,56 80,66" fill="#1a2030" /><rect x="52" y="54" width="5" height="24" fill="#c8d0d8" /><rect x="60" y="54" width="6" height="20" fill="#c8d0d8" /><rect x="37" y="57" width="4" height="10" fill="#c8d0d8" /><rect x="85" y="26" width="3" height="12" fill="#1a1a20" /><rect x="48" y="60" width="3" height="18" fill="#6a3020" /><polygon points="22,66 36,72 45,76 62,86 82,94 106,90 106,106 28,106" fill="#2c4a38" /><ellipse cx="50" cy="88" rx="12" ry="6" fill="#3a5a40" /></g></svg><rect x="1724.5" y="1080.5" width="33" height="33" rx="4" fill="none" stroke="#d1d5db" stroke-opacity="0.6" stroke-width="1"/><svg x="1766" y="1080" width="34" height="34" viewBox="0 0 100 100" preserveAspectRatio="none"><g clip-path="url(#tc)"><rect x="-6" y="-6" width="112" height="112" fill="url(#tg11)" /><polygon points="-6,49 20,47 36,49 36,74 -6,74" fill="#78a058" /><ellipse cx="10" cy="62" rx="16" ry="10" fill="#6a9050" /><polygon points="-6,72 106,72 106,106 -6,106" fill="#8aa060" /><polygon points="36,86 106,84 106,106 30,106" fill="#a08868" /><ellipse cx="6" cy="72" rx="8" ry="10" fill="#b08080" /><ellipse cx="10" cy="88" rx="10" ry="5" fill="#5a7a48" /><polygon points="34,80 35,45 39,37 45,44 45,80" fill="#8a7870" /><polygon points="38,38 60,24 74,20 72,28 46,52" fill="#8a9a88" /><rect x="48" y="25" width="9" height="17" fill="#a04a38" /><polygon points="45,50 73,40 73,84 45,80" fill="#a86450" /><rect x="50" y="52" width="6" height="22" fill="#4a5058" /><rect x="59" y="50" width="6" height="22" fill="#4a5058" /><polygon points="72,40 88,14 100,16 106,18 106,70 73,84" fill="#a87868" /><rect x="82" y="-6" width="7" height="21" fill="#b05040" /><polygon points="90,6 106,6 106,20 92,16" fill="#c04030" /><polygon points="78,62 106,42 106,106 80,100" fill="#8a8070" /><polygon points="78,62 106,40 106,50 82,66" fill="#8c9c8a" /><rect x="92" y="66" width="6" height="30" fill="#4a3a38" /></g></svg><rect x="1766.5" y="1080.5" width="33" height="33" rx="4" fill="none" stroke="#d1d5db" stroke-opacity="0.6" stroke-width="1"/><svg x="1808" y="1080" width="34" height="34" viewBox="0 0 100 100" preserveAspectRatio="none"><g clip-path="url(#tc)"><rect x="-6" y="-6" width="112" height="112" fill="url(#tg12)" /><polygon points="68,0 100,0 100,62 86,46 64,26" fill="#4a8a38" /><polygon points="0,62 36,62 36,82 0,82" fill="#4a8a40" /><ellipse cx="14" cy="68" rx="10" ry="5" fill="#d04858" /><polygon points="35,55 40,36 50,38 52,50 70,22 70,84 36,80" fill="#9a80d0" /><polygon points="42,50 70,18 88,16 58,48" fill="#b8a8e0" /><rect x="50" y="25" width="5" height="14" fill="#7a4a40" /><polygon points="70,20 88,15 90,86 70,86" fill="#c83828" /><polygon points="80,60 100,60 100,90 80,88" fill="#e8a040" /><polygon points="78,60 100,44 100,60" fill="#4a8a38" /><rect x="83" y="64" width="5" height="22" fill="#e84830" /><rect x="92" y="62" width="6" height="12" fill="#3a6ad0" /><rect x="46" y="52" width="4" height="8" fill="#f0f0f0" /><rect x="58" y="50" width="5" height="9" fill="#f0f0f0" /><rect x="46" y="64" width="4" height="9" fill="#f0f0f0" /><rect x="58" y="64" width="5" height="10" fill="#f0f0f0" /><polygon points="0,78 36,76 100,88 100,100 0,100" fill="#a650a8" /><polygon points="40,85 90,90 100,100 60,100" fill="#c060a0" /></g></svg><rect x="1808.5" y="1080.5" width="33" height="33" rx="4" fill="none" stroke="#d1d5db" stroke-opacity="0.6" stroke-width="1"/><svg x="1850" y="1080" width="34" height="34" viewBox="0 0 100 100" preserveAspectRatio="none"><g clip-path="url(#tc)"><rect x="-6" y="-6" width="112" height="112" fill="url(#tg13)" /><ellipse cx="12" cy="10" rx="14" ry="12" fill="url(#tsun13)" /><polygon points="0,62 40,66 70,95 40,100 0,100" fill="#4a6a50" /><polygon points="0,72 30,78 55,100 0,100" fill="#5a8a88" /><polygon points="33,57 42,40 60,35 72,18 86,26 100,42 100,100 36,90" fill="#2c5a80" /><polygon points="40,42 72,16 88,28 52,50" fill="#2a1a20" /><polygon points="72,22 98,46 98,82 72,86" fill="#c8a040" /><polygon points="36,58 44,52 44,90 36,88" fill="#8a2a28" /><rect x="88" y="64" width="12" height="32" fill="#8a2a28" /><rect x="48" y="52" width="5" height="10" fill="#e8c060" /><rect x="56" y="50" width="4" height="10" fill="#e8c060" /><rect x="64" y="48" width="4" height="10" fill="#e8c060" /><rect x="52" y="68" width="4" height="12" fill="#e8c060" /><rect x="62" y="66" width="4" height="12" fill="#e8c060" /><rect x="80" y="66" width="5" height="10" fill="#e8c060" /><ellipse cx="62" cy="88" rx="16" ry="6" fill="#b070a0" /></g></svg><rect x="1850.5" y="1080.5" width="33" height="33" rx="4" fill="none" stroke="#d1d5db" stroke-opacity="0.6" stroke-width="1"/><svg x="1892" y="1080" width="34" height="34" viewBox="0 0 100 100" preserveAspectRatio="none"><g clip-path="url(#tc)"><rect x="-6" y="-6" width="112" height="112" fill="url(#tg20)" /><polygon points="0,65 10,65 10,72 0,72" fill="#3a4050" /><polygon points="10,68 34,68 34,73 10,73" fill="#6a7060" /><polygon points="0,72 35,72 65,80 100,94 100,100 0,100" fill="#6a6068" /><polygon points="0,92 16,73 18,73 2,96" fill="#d8d8d8" /><polygon points="34,74 36,40 40,37 50,40 50,48 72,22 88,12 100,0 100,86 80,82 50,78" fill="#b86a30" /><polygon points="40,37 55,37 48,52 42,50" fill="#5a2a20" /><polygon points="48,48 70,22 88,12 72,32 56,46" fill="#8a3a1c" /><polygon points="70,30 88,14 88,80 70,78" fill="#8a4a28" /><polygon points="78,60 100,45 100,56 82,62" fill="#b02820" /><rect x="52" y="48" width="6" height="8" fill="#f0f0f0" /><rect x="52" y="64" width="6" height="9" fill="#e8e8e8" /><rect x="91" y="24" width="4" height="8" fill="#f0f0f0" /><rect x="88" y="72" width="4" height="12" fill="#f0f0f0" /><rect x="37" y="66" width="7" height="9" fill="#f0f0f0" /></g></svg><rect x="1892.5" y="1080.5" width="33" height="33" rx="4" fill="none" stroke="#d1d5db" stroke-opacity="0.6" stroke-width="1"/><svg x="1934" y="1080" width="34" height="34" viewBox="0 0 100 100" preserveAspectRatio="none"><g clip-path="url(#tc)"><rect x="-6" y="-6" width="112" height="112" fill="url(#tg21)" /><ellipse cx="20" cy="20" rx="22" ry="12" fill="#b8b0e4" /><polygon points="-6,47 38,45 40,54 -6,56" fill="#e8e6f2" /><polygon points="-6,55 36,54 36,70 -6,72" fill="#5a5a62" /><rect x="12" y="55" width="2" height="14" fill="#c8c8d0" /><rect x="20" y="55" width="2" height="14" fill="#b8b8c0" /><polygon points="35,52 72,42 100,30 100,88 80,92 35,72" fill="#4c4c54" /><polygon points="72,40 100,4 100,62 72,60" fill="#3e3e46" /><rect x="36" y="52" width="3" height="22" fill="#d8d8e0" /><rect x="45" y="50" width="3" height="26" fill="#d8d8e0" /><rect x="56" y="48" width="3" height="30" fill="#d8d8e0" /><rect x="72" y="42" width="4" height="40" fill="#e0e0e8" /><rect x="90" y="18" width="3" height="26" fill="#c8c8d0" /><polygon points="26,58 38,42 44,48 36,60" fill="#e8e6f2" /><polygon points="45,50 47,45 90,0 100,0 100,4 72,40" fill="#e6e2f4" /><rect x="52" y="25" width="6" height="13" fill="#8a8a92" /><polygon points="76,62 100,42 100,62" fill="#eceaf6" /><polygon points="-6,70 25,70 45,80 75,106 -6,106" fill="#dccdee" /><polygon points="25,70 45,80 75,106 100,106 100,88 80,92 36,72" fill="#7c8290" /></g></svg><rect x="1934.5" y="1080.5" width="33" height="33" rx="4" fill="none" stroke="#d1d5db" stroke-opacity="0.6" stroke-width="1"/><svg x="1976" y="1080" width="34" height="34" viewBox="0 0 100 100" preserveAspectRatio="none"><g clip-path="url(#tc)"><rect x="-6" y="-6" width="112" height="112" fill="url(#tg22)" /><polygon points="0,49 30,45 36,49 36,68 0,68" fill="#a8a090" /><polygon points="0,50 30,45 36,50 0,54" fill="#5a5848" /><polygon points="0,64 100,76 100,100 0,100" fill="#8a8070" /><polygon points="0,66 36,68 36,90 0,90" fill="#7a6a60" /><polygon points="36,76 37,37 40,36 47,42 47,76" fill="#b0aca0" /><polygon points="46,54 72,38 72,84 46,80" fill="#c4c0b4" /><polygon points="45,53 88,3 96,8 56,56" fill="#8c8c8a" /><polygon points="72,38 90,8 100,24 100,82 72,84" fill="#5c4c42" /><polygon points="80,60 100,42 100,50 82,62" fill="#7a7068" /><rect x="58" y="50" width="4" height="22" fill="#4a3a30" /><rect x="48" y="62" width="4" height="14" fill="#4a3a30" /></g></svg><rect x="1976.5" y="1080.5" width="33" height="33" rx="4" fill="none" stroke="#d1d5db" stroke-opacity="0.6" stroke-width="1"/><svg x="2018" y="1080" width="34" height="34" viewBox="0 0 100 100" preserveAspectRatio="none"><g clip-path="url(#tc)"><rect x="-6" y="-6" width="112" height="112" fill="url(#tg23)" /><polygon points="-6,40 12,48 28,58 30,80 -6,92" fill="#c89060" /><polygon points="-6,40 12,48 14,54 -6,48" fill="#b86848" /><polygon points="28,54 36,50 42,76 30,78" fill="#e0c8a8" /><polygon points="30,54 34,50 42,52 40,58" fill="#c04030" /><polygon points="35,48 50,36 56,16 80,0 106,-6 106,94 40,74" fill="#d88850" /><polygon points="70,36 86,26 86,80 70,76" fill="#c8c840" /><polygon points="38,40 46,38 50,50 40,52" fill="#b83020" /><polygon points="54,17 70,2 90,4 76,18" fill="#b06040" /><rect x="79" y="16" width="4" height="8" fill="#2a4a9a" /><polygon points="30,78 40,72 56,82 72,106 18,106" fill="#a8a8c4" /><polygon points="-6,92 30,78 18,106 -6,106" fill="#c88868" /><polygon points="56,82 106,92 106,106 72,106" fill="#c87848" /><rect x="90" y="62" width="8" height="20" fill="#2a3a5a" /><rect x="72" y="70" width="6" height="16" fill="#3aa060" /><rect x="58" y="56" width="5" height="18" fill="#3a6ac0" /></g></svg><rect x="2018.5" y="1080.5" width="33" height="33" rx="4" fill="none" stroke="#d1d5db" stroke-opacity="0.6" stroke-width="1"/><svg x="2060" y="1080" width="34" height="34" viewBox="0 0 100 100" preserveAspectRatio="none"><g clip-path="url(#tc)"><rect x="-6" y="-6" width="112" height="112" fill="url(#tg30)" /><ellipse cx="20" cy="15" rx="8" ry="4" fill="#80b880" /><ellipse cx="60" cy="10" rx="14" ry="6" fill="#8a9a48" /><ellipse cx="12" cy="40" rx="14" ry="8" fill="#3a7a58" /><polygon points="0,53 35,51 35,58 0,61" fill="#a02838" /><polygon points="2,59 35,56 35,70 2,68" fill="#e8e4c8" /><polygon points="33,60 39,38 44,46 44,80 33,76" fill="#c83c3c" /><polygon points="43,47 70,41 70,82 43,79" fill="#f2eed8" /><polygon points="42,47 62,28 85,16 70,41" fill="#c8c0e8" /><polygon points="70,41 85,16 100,38 100,60 82,58 70,60" fill="#e0d090" /><rect x="52" y="22" width="5" height="16" fill="#b04838" /><polygon points="80,58 100,45 100,86 80,83" fill="#c83030" /><rect x="47" y="52" width="3" height="6" fill="#8a8a80" /><rect x="55" y="50" width="3" height="6" fill="#8a8a80" /><rect x="62" y="48" width="3" height="6" fill="#8a8a80" /><rect x="76" y="26" width="5" height="9" fill="#c08070" /><polygon points="0,62 30,70 60,82 100,86 100,106 -6,106" fill="#b84a20" /><polygon points="0,80 40,86 60,106 -6,106" fill="#a03a18" /></g></svg><rect x="2060.5" y="1080.5" width="33" height="33" rx="4" fill="none" stroke="#d1d5db" stroke-opacity="0.6" stroke-width="1"/><svg x="2102" y="1080" width="34" height="34" viewBox="0 0 100 100" preserveAspectRatio="none"><g clip-path="url(#tc)"><rect x="-6" y="-6" width="112" height="112" fill="url(#tg31)" /><polygon points="0,0 10,0 0,5" fill="#d8d0c8" /><polygon points="0,6 22,0 40,0 36,30 26,50 0,50" fill="#a89078" /><ellipse cx="14" cy="24" rx="9" ry="14" fill="#c8a880" /><ellipse cx="30" cy="36" rx="6" ry="10" fill="#c0a888" /><ellipse cx="6" cy="14" rx="5" ry="4" fill="#e0c8a8" /><ellipse cx="62" cy="14" rx="16" ry="10" fill="#cfd3dc" /><ellipse cx="82" cy="30" rx="12" ry="8" fill="#c4c8d2" /><ellipse cx="50" cy="34" rx="10" ry="8" fill="#8a8a90" /><polygon points="0,48 30,48 40,46 40,76 0,76" fill="#a4b0c4" /><ellipse cx="12" cy="60" rx="8" ry="9" fill="#7c889c" /><ellipse cx="28" cy="66" rx="6" ry="7" fill="#8a96a8" /><polygon points="46,46 78,20 100,14 100,86 46,80" fill="#9c8a7a" /><polygon points="35,78 36,40 46,45 46,80" fill="#d8b050" /><polygon points="35,41 40,37 50,47 46,49" fill="#f2f2f8" /><polygon points="46,46 62,30 80,16 100,12 100,20 80,26 50,50" fill="#f4f4fa" /><polygon points="72,36 82,30 100,30 100,48 82,48 72,50" fill="#e2e2ea" /><polygon points="70,56 100,46 100,60 72,64" fill="#f0f0f6" /><rect x="88" y="24" width="10" height="14" fill="#4a4038" /><rect x="56" y="52" width="6" height="12" fill="#5a4a40" /><polygon points="-6,74 46,77 100,86 100,106 -6,106" fill="#eeeef4" /></g></svg><rect x="2102.5" y="1080.5" width="33" height="33" rx="4" fill="none" stroke="#d1d5db" stroke-opacity="0.6" stroke-width="1"/><svg x="2144" y="1080" width="34" height="34" viewBox="0 0 100 100" preserveAspectRatio="none"><g clip-path="url(#tc)"><rect x="-6" y="-6" width="112" height="112" fill="url(#tg32)" /><ellipse cx="16" cy="48" rx="20" ry="18" fill="url(#tsun32)" /><polygon points="0,66 100,74 100,100 0,100" fill="#4a4828" /><polygon points="34,50 72,38 72,80 34,72" fill="#a88050" /><rect x="37" y="54" width="4" height="16" fill="#d8b070" /><rect x="46" y="52" width="4" height="20" fill="#d8b070" /><rect x="54" y="48" width="4" height="24" fill="#d8b070" /><rect x="62" y="46" width="4" height="28" fill="#d8b070" /><polygon points="32,50 92,12 100,22 72,38" fill="#8a6a40" /><polygon points="72,38 92,12 100,22 100,84 72,80" fill="#3a3028" /><polygon points="34,72 72,80 100,82 100,92 40,88" fill="#4a5030" /></g></svg><rect x="2144.5" y="1080.5" width="33" height="33" rx="4" fill="none" stroke="#d1d5db" stroke-opacity="0.6" stroke-width="1"/><svg x="2186" y="1080" width="34" height="34" viewBox="0 0 100 100" preserveAspectRatio="none"><g clip-path="url(#tc)"><rect x="-6" y="-6" width="112" height="112" fill="url(#tg33)" /><polygon points="0,47 20,45 36,47 36,68 0,68" fill="#5a8a38" /><ellipse cx="12" cy="56" rx="12" ry="8" fill="#3a6a2a" /><polygon points="0,64 100,70 100,100 0,100" fill="#a8b050" /><ellipse cx="16" cy="70" rx="18" ry="7" fill="#9a80b8" /><ellipse cx="60" cy="90" rx="22" ry="6" fill="#b8a0c8" /><polygon points="34,55 38,37 44,40 44,75 34,75" fill="#d03828" /><polygon points="44,52 85,30 85,78 44,75" fill="#e03828" /><polygon points="42,52 85,12 88,28 50,56" fill="#7a8838" /><polygon points="85,10 100,0 100,62 85,72" fill="#e04028" /><polygon points="38,37 50,38 46,50" fill="#5a5a60" /><polygon points="88,60 100,40 100,62 88,62" fill="#8a8a80" /><rect x="58" y="56" width="6" height="18" fill="#a07848" /><rect x="93" y="70" width="6" height="14" fill="#c8d0c0" /></g></svg><rect x="2186.5" y="1080.5" width="33" height="33" rx="4" fill="none" stroke="#d1d5db" stroke-opacity="0.6" stroke-width="1"/><rect x="2228" y="1080" width="34" height="34" rx="4" fill="#000" stroke="#d1d5db" stroke-width="1"/><svg x="2228" y="1080" width="34" height="34" viewBox="0 0 240 240"><g stroke="#fff" stroke-width="10" fill="none" stroke-linecap="round"><path d="M0 113 L21 116 L44 112 M53 112 L86 106 L81 144 M0 146 L18 147 L33 162 L60 162 L80 161 M92 89 L117 89 M92 89 L99 114 M207 38 L168 90 L177 102 L179 189 M225 107 L183 150 M237 120 L209 140 M164 180 L171 195 L189 194 L190 171"/></g></svg></svg>
<div class="a" style="left:1274px;top:1148px;width:191px;height:42px;background:linear-gradient(#4b5564,#424a59);border:1px solid #535c6b;border-radius:7px"></div>
<div class="a" style="left:1481px;top:1148px;width:192px;height:42px;background:linear-gradient(#4b5564,#424a59);border:1px solid #535c6b;border-radius:7px"></div>
<div class="t" style="left:1560.2px;top:1162.3px;font-size:15px;color:#e5e7eb;font-weight:bold;transform:scaleX(0.9444);">Save</div>
<div class="a" style="left:1689px;top:1148px;width:191px;height:42px;background:linear-gradient(#4b5564,#424a59);border:1px solid #535c6b;border-radius:7px"></div>
<div class="t" style="left:1773px;top:1162.3px;font-size:15px;color:#e5e7eb;font-weight:bold;transform:scaleX(0.9778);">Zip</div>
<div class="a" style="left:1896px;top:1148px;width:192px;height:42px;background:linear-gradient(#4b5564,#424a59);border:1px solid #535c6b;border-radius:7px"></div>
<div class="t" style="left:1934.2px;top:1162.3px;font-size:15px;color:#e5e7eb;font-weight:bold;transform:scaleX(0.9550);">Send to img2img</div>
<div class="a" style="left:2104px;top:1148px;width:191px;height:42px;background:linear-gradient(#4b5564,#424a59);border:1px solid #535c6b;border-radius:7px"></div>
<div class="t" style="left:2147px;top:1162.3px;font-size:15px;color:#e5e7eb;font-weight:bold;transform:scaleX(0.9739);">Send to inpaint</div>
<div class="a" style="left:2311px;top:1148px;width:192px;height:42px;background:linear-gradient(#4b5564,#424a59);border:1px solid #535c6b;border-radius:7px"></div>
<div class="t" style="left:2358.4px;top:1162.3px;font-size:15px;color:#e5e7eb;font-weight:bold;transform:scaleX(0.9422);">Send to extras</div>
<div class="t" style="left:1280px;top:1224.6px;font-size:14px;color:#d1d5db;font-weight:normal;transform:scaleX(0.9149);">Steps: 50, Sampler: Euler a, CFG scale: 5, Seed: 12345, Size: 512x512, Model hash: e1441589a6, Model: v1-5-pruned, ControlNet Enabled: True, ControlNet Module: none, ControlNet Model: control_scribble-fp16</div>
<div class="t" style="left:1280px;top:1244.6px;font-size:14px;color:#d1d5db;font-weight:normal;transform:scaleX(0.9280);">[c508311e], ControlNet Weight: 1, ControlNet Guidance Strength: 1</div>
<div class="t" style="left:1280px;top:1265.8px;font-size:12px;color:#3d4654;font-weight:normal;transform:scaleX(0.9010);">Time taken: 1m 48.22s&nbsp;&nbsp;Torch active/reserved: 7613/8572 MiB, Sys VRAM: 10867/24227 MiB (44.85%)</div>
<div class="a" style="left:1274px;top:1282px;width:1228px;height:1px;background:#374151"></div>
<svg class="a" style="left:2157px;top:224px" width="16" height="16" viewBox="0 0 16 16"><path d="M13.5 2.5 L4 12" stroke="#d1d5db" stroke-width="1.8"/><path d="M2.5 8 L3 13 L8 13.5" stroke="#d1d5db" stroke-width="1.8" fill="none"/></svg>
<svg class="a" style="left:2202px;top:222px" width="18" height="19" viewBox="0 0 18 19"><path d="M1.5 3 L16.5 3 L14.5 17 Q14 18 13 18 L5 18 Q4 18 3.5 17 Z" fill="#9ca3a6" stroke="#000" stroke-width="1.2"/><ellipse cx="9" cy="3" rx="7.5" ry="1.8" fill="#c4c9cc" stroke="#000" stroke-width="1"/><path d="M4 6 L13 16 M7 5 L14 12 M10 5 L14.5 8 M14 6 L5 16 M11 5 L4 12 M8 5 L3.5 8" stroke="#6b7275" stroke-width="0.8"/></svg>
<svg class="a" style="left:2250px;top:222px" width="15" height="19" viewBox="0 0 15 19"><rect x="1" y="1" width="13" height="17" rx="1.5" fill="#333" stroke="#000" stroke-width="1.2"/><path d="M1.6 1.6 H13.4 V11 Q9 9 1.6 12 Z" fill="#e8341c"/><circle cx="9" cy="5.5" r="3" fill="#fff"/></svg>
<svg class="a" style="left:2296px;top:222px" width="16" height="19" viewBox="0 0 16 19"><rect x="1" y="2" width="14" height="16" rx="1" fill="#c98a4a" stroke="#000" stroke-width="1"/><rect x="2.6" y="3.6" width="10.8" height="13" fill="#fff"/><rect x="5" y="1" width="6" height="3" rx="1" fill="#aaa" stroke="#333" stroke-width="0.6"/><path d="M4 6 H12 M4 8 H10 M4 10 H12 M4 12 H12 M4 14.5 H8" stroke="#9a9a9a" stroke-width="1"/></svg>
<svg class="a" style="left:2341px;top:222px" width="18" height="19" viewBox="0 0 18 19"><path d="M1 1 H14 L17 4 V18 H1 Z" fill="#555" stroke="#000" stroke-width="1.3"/><rect x="4" y="1.6" width="8" height="5" fill="#c8c8c8"/><rect x="9.5" y="2.4" width="2" height="3.4" fill="#222"/><rect x="3" y="9" width="12" height="8.4" fill="#fafafa"/><rect x="3" y="15.4" width="12" height="2" fill="#d0105a"/></svg>
<div class="a" style="left:1097px;top:609px;width:37px;height:40px;border-radius:8px;background:linear-gradient(#465061,#3a4353);border:1px solid #4b5563"></div>
<div class="a" style="left:1142px;top:609px;width:37px;height:40px;border-radius:8px;background:linear-gradient(#465061,#3a4353);border:1px solid #4b5563"></div>
<svg class="a" style="left:1107px;top:620px" width="17" height="19" viewBox="0 0 17 19"><path d="M8.5 1 L16 5 L16 14 L8.5 18 L1 14 L1 5 Z" fill="#f4f4f4" stroke="#000" stroke-width="1.3"/><path d="M1 5 L8.5 9 L16 5 M8.5 9 V18" stroke="#ccc" stroke-width="0.6" fill="none"/><ellipse cx="8.5" cy="5" rx="1.2" ry="0.9" fill="#d02020"/><circle cx="3.5" cy="9" r="0.8" fill="#222"/><circle cx="6" cy="13" r="0.8" fill="#222"/><circle cx="11.5" cy="13.5" r="0.8" fill="#222"/><circle cx="14" cy="9.5" r="0.8" fill="#222"/></svg>
<svg class="a" style="left:1151px;top:619px" width="20" height="20" viewBox="0 0 20 20"><g stroke="#000" stroke-width="1" stroke-linejoin="round"><path d="M7 2 L12 2 L15.5 8 L17.5 7 L16 12.5 L11 11.5 L13 10.3 L10.5 6 L8.5 9.5 L5.5 7.5 Z" fill="#22cc22"/><path d="M4.5 9 L7.5 11 L5.5 14.5 L9 14.5 L9 12.5 L12 16.5 L9 19 L9 17.5 L4 17.5 Q1.5 17.5 2.5 15 Z" fill="#19b519"/><path d="M13.5 13 L16.8 11.5 L18.5 14.5 Q19.5 17.5 16.5 17.5 L12.5 17.5 L12.5 15 L15.5 15 Z" fill="#22cc22"/></g></svg>
<svg class="a" style="left:42px;top:717px" width="11" height="11" viewBox="0 0 11 11"><rect x="0.5" y="0.5" width="10" height="10" fill="none" stroke="#c8ccd2" stroke-width="0.9"/><circle cx="3.2" cy="3.2" r="1" fill="#c8ccd2"/><path d="M1 10 L7.5 3.5 L10 6" stroke="#c8ccd2" stroke-width="0.9" fill="none"/></svg>
<svg class="a" style="left:1188px;top:721px" width="14" height="14" viewBox="0 0 14 14"><path d="M3.2 4 A5 5 0 1 1 2.6 9" stroke="#c8cdd4" stroke-width="1.2" fill="none"/><path d="M1.5 1.8 L2 5.2 L5.2 4.6" stroke="#c8cdd4" stroke-width="1.2" fill="none"/></svg>
<svg class="a" style="left:1213px;top:722px" width="12" height="12" viewBox="0 0 12 12"><path d="M1.5 1.5 L10.5 10.5 M10.5 1.5 L1.5 10.5" stroke="#e5e7eb" stroke-width="1.2"/></svg>
<svg class="a" style="left:1213px;top:753px" width="13" height="13" viewBox="0 0 13 13"><path d="M3.5 10.5 L11 3 Q12 2 11.5 1.5 Q11 1 10 2 L2.5 9.5 L1.5 12 Z" stroke="#c8cdd4" stroke-width="1" fill="none"/><path d="M2 1 Q4 2 2.5 3.5 Q4 5 3 6" stroke="#c8cdd4" stroke-width="0.8" fill="none"/></svg>
<svg class="a" style="left:1151px;top:987px" width="19" height="15" viewBox="0 0 19 15"><rect x="0.8" y="1" width="17.4" height="13" rx="1" fill="#444" stroke="#000" stroke-width="1.3"/><rect x="1.6" y="2" width="15.8" height="3" fill="#fff"/><rect x="2" y="2.4" width="1.2" height="2" fill="#e33"/><circle cx="9.5" cy="8.5" r="3.6" fill="#333" stroke="#ccc" stroke-width="0.8"/></svg>
<svg class="a" style="left:1209px;top:987px" width="15" height="15" viewBox="0 0 15 15"><path d="M1 4.5 H12 M8.5 1 L12.5 4.5 L8.5 8" stroke="#e5e7eb" stroke-width="2" fill="none"/><path d="M14 10.5 H3 M6.5 7 L2.5 10.5 L6.5 14" stroke="#e5e7eb" stroke-width="2" fill="none"/></svg>
<svg class="a" style="left:1359px;top:1162px" width="20" height="15" viewBox="0 0 20 15"><path d="M1 13.5 V2 Q1 1 2 1 H5 L6 2.5 H13 V4" fill="#f0a800" stroke="#000" stroke-width="1.2"/><path d="M1 13.5 L4 4.5 H18.5 L15.5 13.5 Z" fill="#ffd67a" stroke="#000" stroke-width="1.2"/><rect x="1.8" y="1.8" width="3" height="1.6" fill="#d02010"/></svg>
<svg class="a" style="left:515px;top:710px" width="240" height="240" viewBox="0 0 240 240"><g stroke="#000" stroke-width="6.5" fill="none" stroke-linecap="round" stroke-linejoin="round"><path d="M0 114 L10 115 L19 116 L30 114 L42 112"/><path d="M53 111 L70 109 L86 106 L83 120 L81 143"/><path d="M84 140 L88 153"/><path d="M0 145 L14 146 L23 154 L33 161 L47 162 L60 162 L68 158 L80 160"/><path d="M94 89 L106 89 L117 89"/><path d="M94 89 L98 102 L101 115"/><path d="M143 71 L138 62"/><path d="M152 67 L159 63"/><path d="M163 61 L177 54"/><path d="M207 39 L187 65 L167 91 L168 98 L177 101 L177 118 L179 150 L180 192"/><path d="M211 62 L214 93"/><path d="M230 72 L235 80"/><path d="M227 107 L217 110 L200 130 L187 149"/><path d="M238 120 L222 128 L209 140 L222 136 L227 123"/><path d="M165 180 L170 194 L177 187 L189 194 L191 170"/><path d="M112 166 L116 182"/><path d="M102 179 L123 179"/></g><g fill="#000"><circle cx="21" cy="125" r="3.3"/><circle cx="89" cy="179" r="3.5"/><ellipse cx="117" cy="196" rx="4" ry="3"/><ellipse cx="131" cy="56" rx="8" ry="5.5"/><ellipse cx="94" cy="89" rx="5.5" ry="4.5"/><path d="M112 110 L127 93 Q133 90 130 97 L118 112 Z"/><path d="M141 99 L154 85 Q160 82 157 90 L146 101 Z"/><circle cx="168" cy="142" r="3"/><circle cx="168" cy="152" r="3"/><circle cx="168" cy="162" r="3"/><circle cx="168" cy="172" r="3"/><circle cx="143" cy="71" r="3.5"/></g></svg>
<div class="t" style="left:578.7px;top:821.8px;font-size:18px;color:#9ca3af;font-weight:normal;transform:scaleX(1.0494);">Start drawing</div>
</body></html>
